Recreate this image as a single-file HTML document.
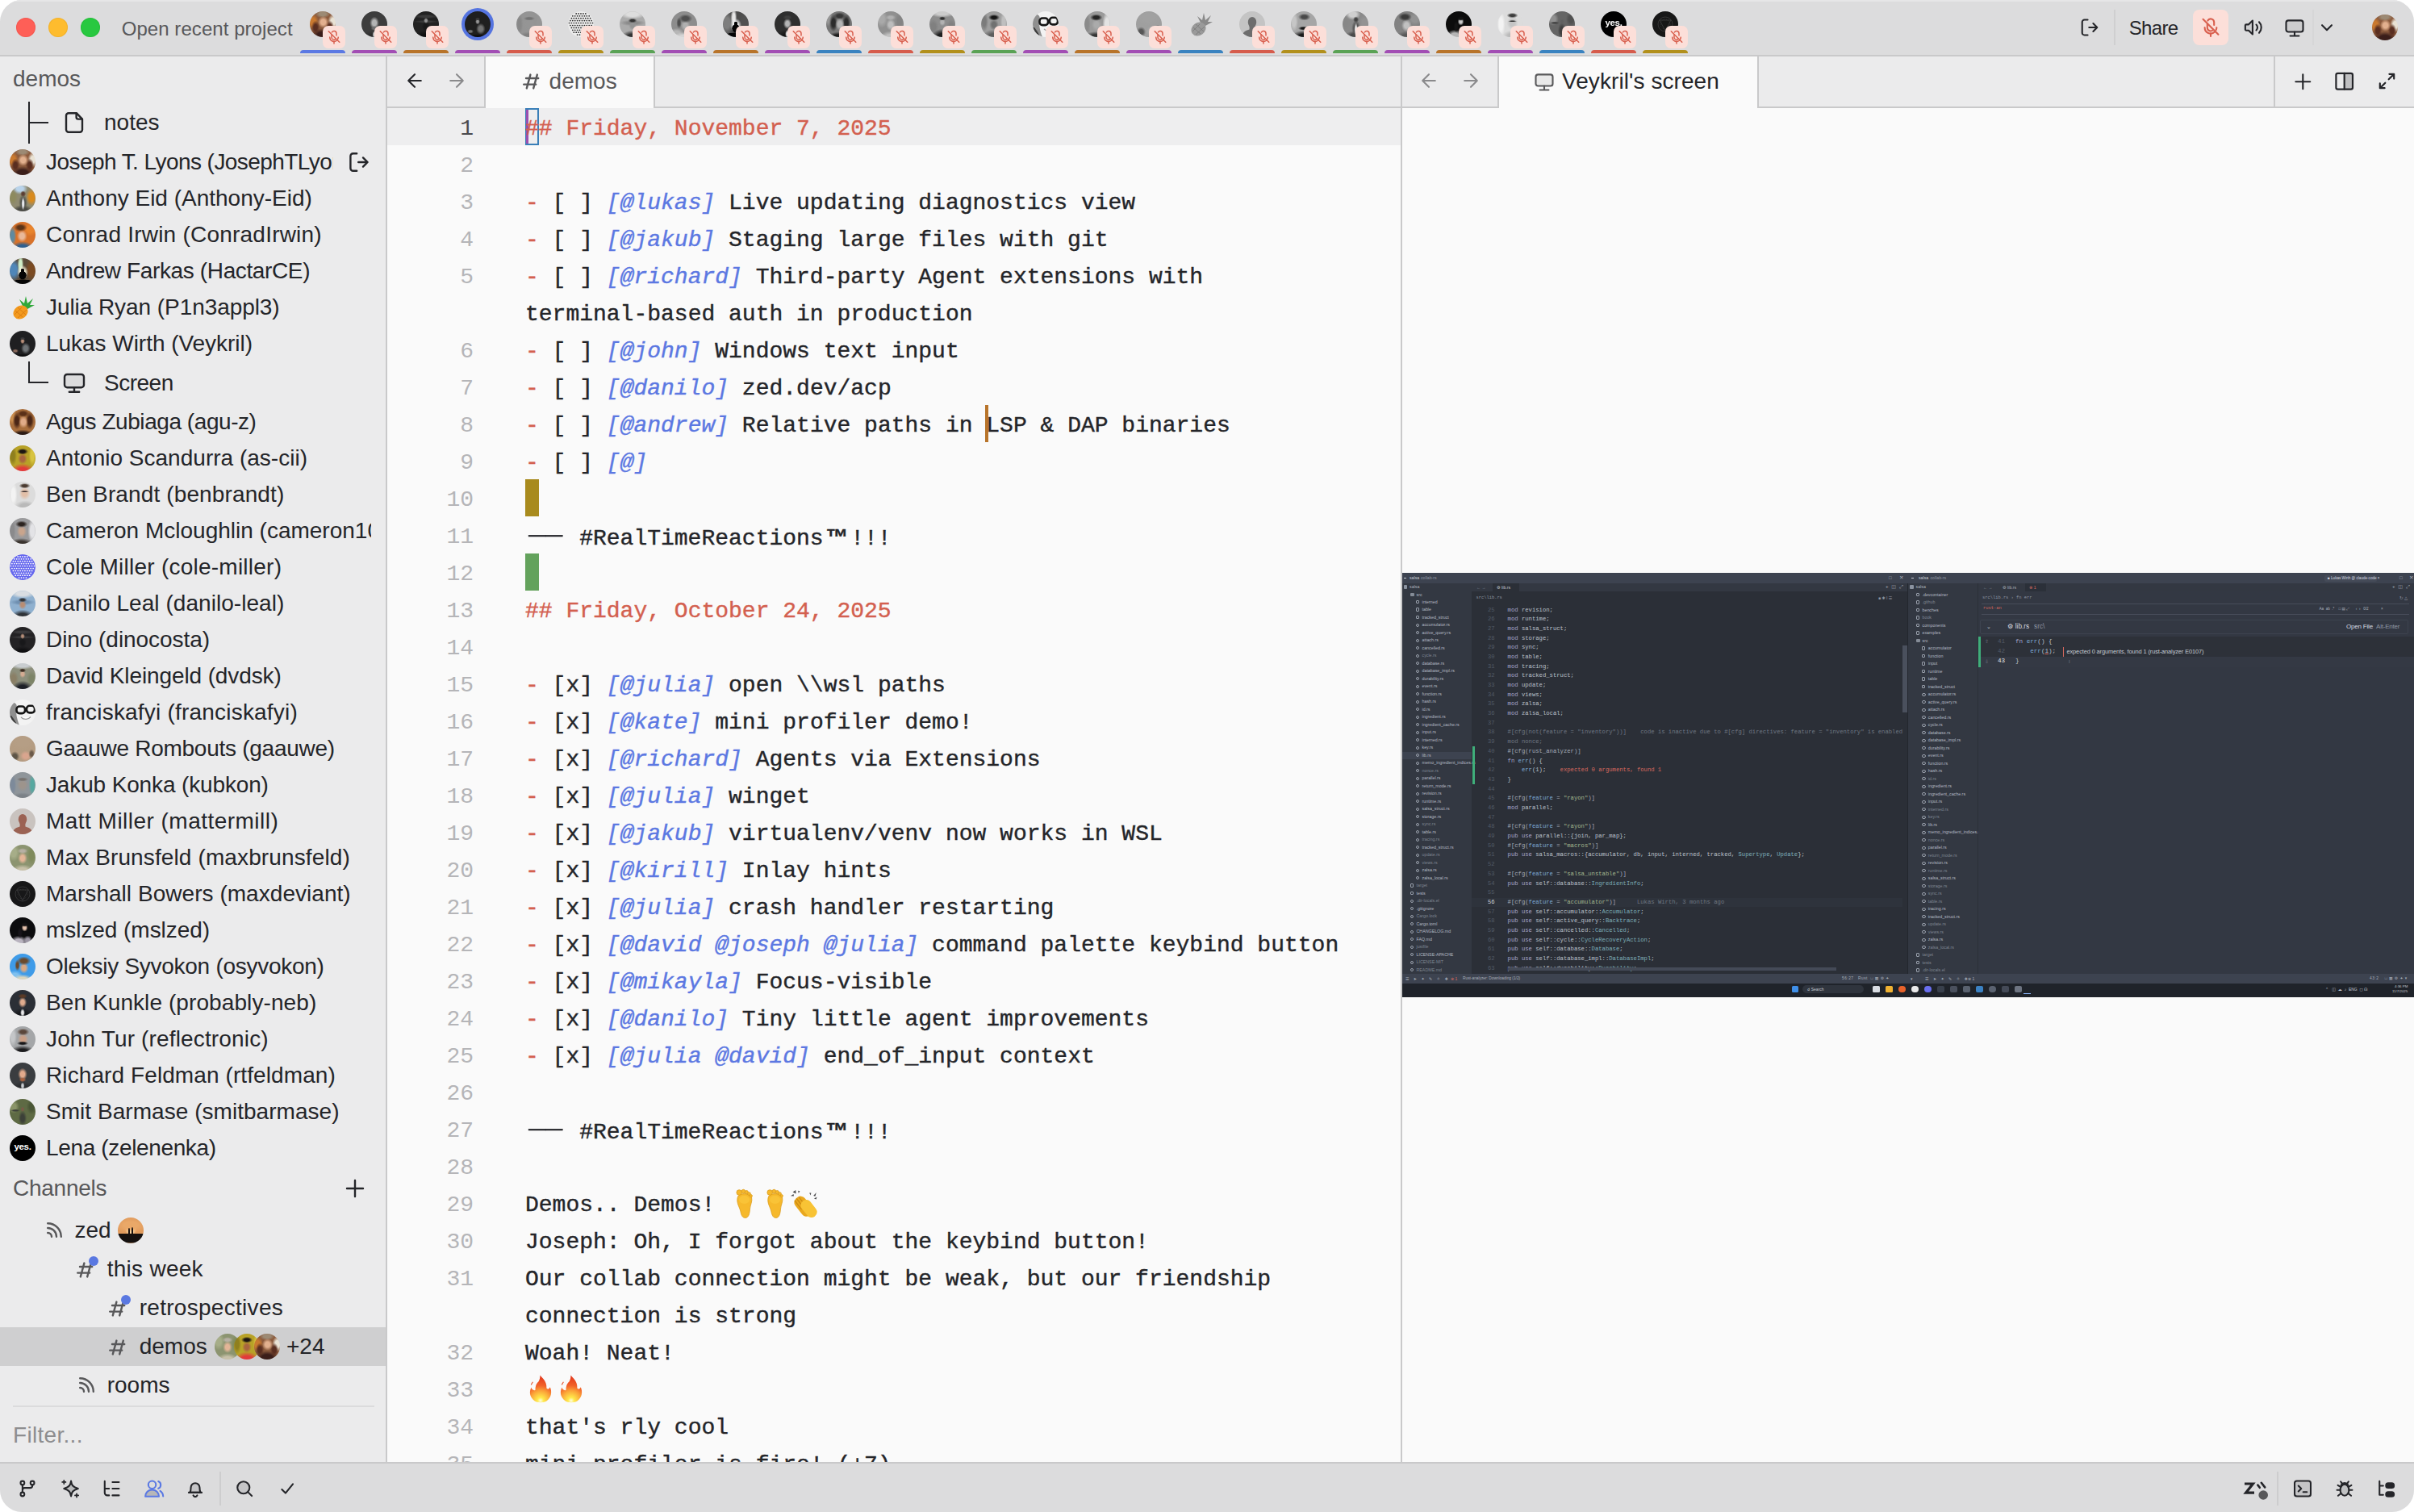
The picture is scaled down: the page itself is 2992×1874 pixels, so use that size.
<!DOCTYPE html>
<html lang="en"><head><meta charset="utf-8"><title>demos — Zed</title>
<style>
*{box-sizing:border-box;margin:0;padding:0}
html,body{width:2992px;height:1874px;background:#fff;overflow:hidden}
body{font-family:"Liberation Sans","DejaVu Sans",sans-serif;font-size:28px;color:#242529;-webkit-font-smoothing:antialiased}
#win{position:absolute;left:0;top:0;width:2992px;height:1874px;background:#fafafa;border-radius:27px;overflow:hidden}
.abs{position:absolute}
.t{position:absolute;white-space:nowrap;line-height:1}
svg{position:absolute;overflow:visible}
/* title bar */
#title{position:absolute;left:0;top:0;width:2992px;height:70px;background:#dcdcdd;border-bottom:2px solid #c9c9ca}
/* status */
#status{position:absolute;left:0;top:1812px;width:2992px;height:62px;background:#dcdcdd;border-top:2px solid #c9c9ca}
/* sidebar */
#side{position:absolute;left:0;top:70px;width:480px;height:1742px;background:#ebebec;border-right:2px solid #c9c9ca;overflow:hidden}
.row{position:absolute;left:0;width:478px;height:45px}
.av{position:absolute;border-radius:50%;overflow:hidden}
.name{position:absolute;left:57px;white-space:nowrap;line-height:32px;height:32px;font-size:28px;color:#242529}
#ed .code{-webkit-text-stroke:0.4px currentColor}
.r{color:#d3604f}
.l{color:#5c78e2;font-style:italic}
.dash{position:relative;top:-3.5px;display:inline-block;width:50.4px;text-align:center;transform:scaleX(1.24);transform-origin:center}
.tm{display:inline-block;width:33.6px;text-align:center;font-family:"Liberation Sans","DejaVu Sans",sans-serif;font-weight:bold}
.em{display:inline-block;position:relative;width:37.8px;height:46px;vertical-align:top;overflow:hidden}
.emsvg{left:0;top:-1.5px}
.emc{position:absolute;left:0;top:0;width:37.8px;color:transparent;font-size:24px;line-height:46px;text-align:center;overflow:hidden}

</style></head>
<body>
<div id="win">
<div id="title">
<div class="abs" style="left:0;top:0;width:2992px;height:2px;background:#e6e6e7"></div><div class="abs" style="left:20px;top:22px;width:24px;height:24px;border-radius:50%;background:#fe5f57;box-shadow:inset 0 0 0 1px #e1494255"></div><div class="abs" style="left:60px;top:22px;width:24px;height:24px;border-radius:50%;background:#febc2e;box-shadow:inset 0 0 0 1px #dfa02355"></div><div class="abs" style="left:100px;top:22px;width:24px;height:24px;border-radius:50%;background:#28c840;box-shadow:inset 0 0 0 1px #1dad2c55"></div><span class="t" style="left:150.7px;top:20.98px;font-size:24px;line-height:29px;color:#58585a;letter-spacing:0.06px">Open recent project</span><div class="abs" style="left:372px;top:62px;width:56px;height:4px;border-radius:4px 4px 0 0;background:#5b79e3"></div><div class="av" style="left:384px;top:14px;width:32px;height:32px;;background:radial-gradient(ellipse 21% 23% at 52% 42%,#e2b08e 0,#e2b08e 45%,transparent 100%),radial-gradient(ellipse 16% 26% at 78% 62%,#5a2e20 0,#5a2e20 45%,transparent 100%),radial-gradient(ellipse 16% 26% at 22% 62%,#5a2e20 0,#5a2e20 45%,transparent 100%),radial-gradient(ellipse 45% 26% at 50% 92%,#3b1e1a 0,#3b1e1a 45%,transparent 100%),radial-gradient(ellipse 30% 16% at 50% 10%,#9c8a74 0,#9c8a74 45%,transparent 100%),radial-gradient(ellipse 20% 30% at 90% 40%,#e9e2d4 0,#e9e2d4 45%,transparent 100%),radial-gradient(ellipse 22% 30% at 12% 40%,#c9792f 0,#c9792f 45%,transparent 100%),#8b5a3c"></div><div class="abs" style="left:400px;top:32px;width:28px;height:28px;border-radius:7px;background:#fcdfd9"></div><svg style="left:404px;top:36px" width="20" height="20" viewBox="0 0 16 16" fill="none" stroke="#d9604f" stroke-width="1.2" stroke-linecap="round" stroke-linejoin="round" ><path d="M8 12.2 V14.3"/><path d="M10.4 6.3 V4.3 A2.4 2.4 0 0 0 5.9 3.2"/><path d="M5.6 5.6 V8.1 A2.4 2.4 0 0 0 9.6 9.9"/><path d="M12.2 8.1 A4.2 4.2 0 0 1 11.7 9.9"/><path d="M3.8 8.1 A4.2 4.2 0 0 0 10.9 11.2"/><path d="M2.6 2.2 L13.4 13"/></svg><div class="abs" style="left:436px;top:62px;width:56px;height:4px;border-radius:4px 4px 0 0;background:#a24eb4"></div><div class="av" style="left:448px;top:14px;width:32px;height:32px;filter:grayscale(1);;background:radial-gradient(ellipse 14% 9% at 50% 66%,#a8613f 0,#a8613f 45%,transparent 100%),radial-gradient(ellipse 18% 24% at 50% 45%,#e2aa8c 0,#e2aa8c 45%,transparent 100%),radial-gradient(ellipse 8% 14% at 50% 90%,#c9ccd0 0,#c9ccd0 45%,transparent 100%),radial-gradient(ellipse 46% 26% at 50% 100%,#2b2d30 0,#2b2d30 45%,transparent 100%),#3a3d40"></div><div class="abs" style="left:464px;top:32px;width:28px;height:28px;border-radius:7px;background:#fcdfd9"></div><svg style="left:468px;top:36px" width="20" height="20" viewBox="0 0 16 16" fill="none" stroke="#d9604f" stroke-width="1.2" stroke-linecap="round" stroke-linejoin="round" ><path d="M8 12.2 V14.3"/><path d="M10.4 6.3 V4.3 A2.4 2.4 0 0 0 5.9 3.2"/><path d="M5.6 5.6 V8.1 A2.4 2.4 0 0 0 9.6 9.9"/><path d="M12.2 8.1 A4.2 4.2 0 0 1 11.7 9.9"/><path d="M3.8 8.1 A4.2 4.2 0 0 0 10.9 11.2"/><path d="M2.6 2.2 L13.4 13"/></svg><div class="abs" style="left:500px;top:62px;width:56px;height:4px;border-radius:4px 4px 0 0;background:#b8742a"></div><div class="av" style="left:512px;top:14px;width:32px;height:32px;filter:grayscale(1);;background:radial-gradient(ellipse 44% 26% at 50% 100%,#101012 0,#101012 45%,transparent 100%),radial-gradient(ellipse 9% 11% at 50% 36%,#b48d78 0,#b48d78 45%,transparent 100%),radial-gradient(ellipse 16% 20% at 50% 60%,#18181a 0,#18181a 45%,transparent 100%),radial-gradient(ellipse 50% 6% at 50% 40%,#39383a 0,#39383a 45%,transparent 100%),radial-gradient(ellipse 50% 8% at 50% 20%,#3b3a3c 0,#3b3a3c 45%,transparent 100%),#232224"></div><div class="abs" style="left:528px;top:32px;width:28px;height:28px;border-radius:7px;background:#fcdfd9"></div><svg style="left:532px;top:36px" width="20" height="20" viewBox="0 0 16 16" fill="none" stroke="#d9604f" stroke-width="1.2" stroke-linecap="round" stroke-linejoin="round" ><path d="M8 12.2 V14.3"/><path d="M10.4 6.3 V4.3 A2.4 2.4 0 0 0 5.9 3.2"/><path d="M5.6 5.6 V8.1 A2.4 2.4 0 0 0 9.6 9.9"/><path d="M12.2 8.1 A4.2 4.2 0 0 1 11.7 9.9"/><path d="M3.8 8.1 A4.2 4.2 0 0 0 10.9 11.2"/><path d="M2.6 2.2 L13.4 13"/></svg><div class="abs" style="left:564px;top:62px;width:56px;height:4px;border-radius:4px 4px 0 0;background:#a24eb4"></div><div class="abs" style="left:572px;top:10px;width:40px;height:40px;border-radius:50%;background:#5574e0"></div><div class="av" style="left:576px;top:14px;width:32px;height:32px;filter:grayscale(1);;background:radial-gradient(ellipse 50% 12% at 50% 100%,#0c0c0d 0,#0c0c0d 45%,transparent 100%),radial-gradient(ellipse 12% 8% at 22% 78%,#8a6a5c 0,#8a6a5c 45%,transparent 100%),radial-gradient(ellipse 10% 6% at 50% 30%,#3a3a3c 0,#3a3a3c 45%,transparent 100%),radial-gradient(ellipse 9% 11% at 50% 40%,#b98f7a 0,#b98f7a 45%,transparent 100%),radial-gradient(ellipse 18% 22% at 62% 68%,#6f7376 0,#6f7376 45%,transparent 100%),#1f1f21"></div><div class="abs" style="left:628px;top:62px;width:56px;height:4px;border-radius:4px 4px 0 0;background:#d65c4c"></div><div class="av" style="left:640px;top:14px;width:32px;height:32px;filter:grayscale(1);;background:radial-gradient(ellipse 40% 16% at 50% 95%,#7b8187 0,#7b8187 45%,transparent 100%),radial-gradient(ellipse 22% 8% at 50% 28%,#77726e 0,#77726e 45%,transparent 100%),radial-gradient(ellipse 22% 26% at 50% 50%,#9d948c 0,#9d948c 45%,transparent 100%),radial-gradient(ellipse 14% 44% at 12% 50%,#7d8a9a 0,#7d8a9a 45%,transparent 100%),radial-gradient(ellipse 14% 44% at 88% 50%,#57a8a0 0,#57a8a0 45%,transparent 100%),#8f959a"></div><div class="abs" style="left:656px;top:32px;width:28px;height:28px;border-radius:7px;background:#fcdfd9"></div><svg style="left:660px;top:36px" width="20" height="20" viewBox="0 0 16 16" fill="none" stroke="#d9604f" stroke-width="1.2" stroke-linecap="round" stroke-linejoin="round" ><path d="M8 12.2 V14.3"/><path d="M10.4 6.3 V4.3 A2.4 2.4 0 0 0 5.9 3.2"/><path d="M5.6 5.6 V8.1 A2.4 2.4 0 0 0 9.6 9.9"/><path d="M12.2 8.1 A4.2 4.2 0 0 1 11.7 9.9"/><path d="M3.8 8.1 A4.2 4.2 0 0 0 10.9 11.2"/><path d="M2.6 2.2 L13.4 13"/></svg><div class="abs" style="left:692px;top:62px;width:56px;height:4px;border-radius:4px 4px 0 0;background:#b2901c"></div><div class="av" style="left:704px;top:14px;width:32px;height:32px;filter:grayscale(1);;filter:none"><svg width="32" height="32" viewBox="0 0 32 32" style="left:0;top:0"><circle cx="16.0" cy="16.0" r="16.0" fill="#ececec"/><g fill="#2a2a2a"><circle cx="1.5" cy="14.5" r="0.87"/><circle cx="4.4" cy="8.7" r="0.87"/><circle cx="2.9" cy="11.6" r="0.87"/><circle cx="4.4" cy="14.5" r="0.87"/><circle cx="2.9" cy="17.5" r="0.87"/><circle cx="4.4" cy="20.4" r="0.87"/><circle cx="5.8" cy="5.8" r="0.87"/><circle cx="7.3" cy="8.7" r="0.87"/><circle cx="5.8" cy="11.6" r="0.87"/><circle cx="7.3" cy="14.5" r="0.87"/><circle cx="5.8" cy="17.5" r="0.87"/><circle cx="7.3" cy="20.4" r="0.87"/><circle cx="5.8" cy="23.3" r="0.87"/><circle cx="7.3" cy="26.2" r="0.87"/><circle cx="10.2" cy="2.9" r="0.87"/><circle cx="8.7" cy="5.8" r="0.87"/><circle cx="10.2" cy="8.7" r="0.87"/><circle cx="8.7" cy="11.6" r="0.87"/><circle cx="10.2" cy="14.5" r="0.87"/><circle cx="8.7" cy="17.5" r="0.87"/><circle cx="10.2" cy="20.4" r="0.87"/><circle cx="8.7" cy="23.3" r="0.87"/><circle cx="10.2" cy="26.2" r="0.87"/><circle cx="13.1" cy="2.9" r="0.87"/><circle cx="11.6" cy="5.8" r="0.87"/><circle cx="13.1" cy="8.7" r="0.87"/><circle cx="11.6" cy="11.6" r="0.87"/><circle cx="13.1" cy="14.5" r="0.87"/><circle cx="11.6" cy="17.5" r="0.87"/><circle cx="13.1" cy="20.4" r="0.87"/><circle cx="11.6" cy="23.3" r="0.87"/><circle cx="13.1" cy="26.2" r="0.87"/><circle cx="11.6" cy="29.1" r="0.87"/><circle cx="16.0" cy="2.9" r="0.87"/><circle cx="14.5" cy="5.8" r="0.87"/><circle cx="16.0" cy="8.7" r="0.87"/><circle cx="14.5" cy="11.6" r="0.87"/><circle cx="16.0" cy="14.5" r="0.87"/><circle cx="14.5" cy="17.5" r="0.87"/><circle cx="16.0" cy="20.4" r="0.87"/><circle cx="14.5" cy="23.3" r="0.87"/><circle cx="16.0" cy="26.2" r="0.87"/><circle cx="14.5" cy="29.1" r="0.87"/><circle cx="18.9" cy="2.9" r="0.87"/><circle cx="17.5" cy="5.8" r="0.87"/><circle cx="18.9" cy="8.7" r="0.87"/><circle cx="17.5" cy="11.6" r="0.87"/><circle cx="18.9" cy="14.5" r="0.87"/><circle cx="17.5" cy="17.5" r="0.87"/><circle cx="18.9" cy="20.4" r="0.87"/><circle cx="17.5" cy="23.3" r="0.87"/><circle cx="18.9" cy="26.2" r="0.87"/><circle cx="17.5" cy="29.1" r="0.87"/><circle cx="21.8" cy="2.9" r="0.87"/><circle cx="20.4" cy="5.8" r="0.87"/><circle cx="21.8" cy="8.7" r="0.87"/><circle cx="20.4" cy="11.6" r="0.87"/><circle cx="21.8" cy="14.5" r="0.87"/><circle cx="20.4" cy="17.5" r="0.87"/><circle cx="21.8" cy="20.4" r="0.87"/><circle cx="20.4" cy="23.3" r="0.87"/><circle cx="21.8" cy="26.2" r="0.87"/><circle cx="20.4" cy="29.1" r="0.87"/><circle cx="23.3" cy="5.8" r="0.87"/><circle cx="24.7" cy="8.7" r="0.87"/><circle cx="23.3" cy="11.6" r="0.87"/><circle cx="24.7" cy="14.5" r="0.87"/><circle cx="23.3" cy="17.5" r="0.87"/><circle cx="24.7" cy="20.4" r="0.87"/><circle cx="23.3" cy="23.3" r="0.87"/><circle cx="24.7" cy="26.2" r="0.87"/><circle cx="26.2" cy="5.8" r="0.87"/><circle cx="27.6" cy="8.7" r="0.87"/><circle cx="26.2" cy="11.6" r="0.87"/><circle cx="27.6" cy="14.5" r="0.87"/><circle cx="26.2" cy="17.5" r="0.87"/><circle cx="27.6" cy="20.4" r="0.87"/><circle cx="26.2" cy="23.3" r="0.87"/><circle cx="29.1" cy="11.6" r="0.87"/><circle cx="30.5" cy="14.5" r="0.87"/><circle cx="29.1" cy="17.5" r="0.87"/></g></svg></div><div class="abs" style="left:720px;top:32px;width:28px;height:28px;border-radius:7px;background:#fcdfd9"></div><svg style="left:724px;top:36px" width="20" height="20" viewBox="0 0 16 16" fill="none" stroke="#d9604f" stroke-width="1.2" stroke-linecap="round" stroke-linejoin="round" ><path d="M8 12.2 V14.3"/><path d="M10.4 6.3 V4.3 A2.4 2.4 0 0 0 5.9 3.2"/><path d="M5.6 5.6 V8.1 A2.4 2.4 0 0 0 9.6 9.9"/><path d="M12.2 8.1 A4.2 4.2 0 0 1 11.7 9.9"/><path d="M3.8 8.1 A4.2 4.2 0 0 0 10.9 11.2"/><path d="M2.6 2.2 L13.4 13"/></svg><div class="abs" style="left:756px;top:62px;width:56px;height:4px;border-radius:4px 4px 0 0;background:#5aa255"></div><div class="av" style="left:768px;top:14px;width:32px;height:32px;filter:grayscale(1);;background:radial-gradient(ellipse 17% 9% at 50% 36%,#33363b 0,#33363b 45%,transparent 100%),radial-gradient(ellipse 15% 18% at 50% 55%,#b88d74 0,#b88d74 45%,transparent 100%),radial-gradient(ellipse 44% 26% at 50% 100%,#2f3338 0,#2f3338 45%,transparent 100%),radial-gradient(ellipse 50% 12% at 50% 45%,#6f8fb0 0,#6f8fb0 45%,transparent 100%),radial-gradient(ellipse 50% 18% at 50% 12%,#d9dde2 0,#d9dde2 45%,transparent 100%),#8fb0cf"></div><div class="abs" style="left:784px;top:32px;width:28px;height:28px;border-radius:7px;background:#fcdfd9"></div><svg style="left:788px;top:36px" width="20" height="20" viewBox="0 0 16 16" fill="none" stroke="#d9604f" stroke-width="1.2" stroke-linecap="round" stroke-linejoin="round" ><path d="M8 12.2 V14.3"/><path d="M10.4 6.3 V4.3 A2.4 2.4 0 0 0 5.9 3.2"/><path d="M5.6 5.6 V8.1 A2.4 2.4 0 0 0 9.6 9.9"/><path d="M12.2 8.1 A4.2 4.2 0 0 1 11.7 9.9"/><path d="M3.8 8.1 A4.2 4.2 0 0 0 10.9 11.2"/><path d="M2.6 2.2 L13.4 13"/></svg><div class="abs" style="left:820px;top:62px;width:56px;height:4px;border-radius:4px 4px 0 0;background:#a24eb4"></div><div class="av" style="left:832px;top:14px;width:32px;height:32px;filter:grayscale(1);;background:radial-gradient(ellipse 10% 22% at 30% 45%,#6b4a2c 0,#6b4a2c 45%,transparent 100%),radial-gradient(ellipse 27% 17% at 55% 28%,#6b4a2c 0,#6b4a2c 45%,transparent 100%),radial-gradient(ellipse 18% 22% at 55% 55%,#d9a883 0,#d9a883 45%,transparent 100%),radial-gradient(ellipse 40% 20% at 50% 100%,#d8d5c0 0,#d8d5c0 45%,transparent 100%),radial-gradient(ellipse 30% 20% at 20% 85%,#7fc0ef 0,#7fc0ef 45%,transparent 100%),#3f9be8"></div><div class="abs" style="left:848px;top:32px;width:28px;height:28px;border-radius:7px;background:#fcdfd9"></div><svg style="left:852px;top:36px" width="20" height="20" viewBox="0 0 16 16" fill="none" stroke="#d9604f" stroke-width="1.2" stroke-linecap="round" stroke-linejoin="round" ><path d="M8 12.2 V14.3"/><path d="M10.4 6.3 V4.3 A2.4 2.4 0 0 0 5.9 3.2"/><path d="M5.6 5.6 V8.1 A2.4 2.4 0 0 0 9.6 9.9"/><path d="M12.2 8.1 A4.2 4.2 0 0 1 11.7 9.9"/><path d="M3.8 8.1 A4.2 4.2 0 0 0 10.9 11.2"/><path d="M2.6 2.2 L13.4 13"/></svg><div class="abs" style="left:884px;top:62px;width:56px;height:4px;border-radius:4px 4px 0 0;background:#b8742a"></div><div class="av" style="left:896px;top:14px;width:32px;height:32px;filter:grayscale(1);;background:radial-gradient(ellipse 6% 7% at 50% 46%,#050505 0,#050505 92%,transparent 100%),radial-gradient(ellipse 15% 17% at 50% 66%,#050505 0,#050505 92%,transparent 100%),radial-gradient(ellipse 50% 18% at 50% 100%,#050505 0,#050505 92%,transparent 100%),radial-gradient(ellipse 22% 28% at 50% 55%,#f6f0d8 0,#f6f0d8 45%,transparent 100%),radial-gradient(ellipse 26% 45% at 85% 45%,#7a4a22 0,#7a4a22 45%,transparent 100%),radial-gradient(ellipse 12% 40% at 42% 25%,#cfeec8 0,#cfeec8 45%,transparent 100%),radial-gradient(ellipse 28% 45% at 15% 45%,#4f86b8 0,#4f86b8 45%,transparent 100%),#5a4a38"></div><div class="abs" style="left:912px;top:32px;width:28px;height:28px;border-radius:7px;background:#fcdfd9"></div><svg style="left:916px;top:36px" width="20" height="20" viewBox="0 0 16 16" fill="none" stroke="#d9604f" stroke-width="1.2" stroke-linecap="round" stroke-linejoin="round" ><path d="M8 12.2 V14.3"/><path d="M10.4 6.3 V4.3 A2.4 2.4 0 0 0 5.9 3.2"/><path d="M5.6 5.6 V8.1 A2.4 2.4 0 0 0 9.6 9.9"/><path d="M12.2 8.1 A4.2 4.2 0 0 1 11.7 9.9"/><path d="M3.8 8.1 A4.2 4.2 0 0 0 10.9 11.2"/><path d="M2.6 2.2 L13.4 13"/></svg><div class="abs" style="left:948px;top:62px;width:56px;height:4px;border-radius:4px 4px 0 0;background:#a24eb4"></div><div class="av" style="left:960px;top:14px;width:32px;height:32px;filter:grayscale(1);;background:radial-gradient(ellipse 18% 10% at 50% 24%,#5a3a26 0,#5a3a26 45%,transparent 100%),radial-gradient(ellipse 16% 21% at 50% 48%,#e0ac8e 0,#e0ac8e 45%,transparent 100%),radial-gradient(ellipse 9% 16% at 50% 88%,#e8e8ea 0,#e8e8ea 45%,transparent 100%),radial-gradient(ellipse 46% 30% at 50% 100%,#15171b 0,#15171b 45%,transparent 100%),#2b2f36"></div><div class="abs" style="left:976px;top:32px;width:28px;height:28px;border-radius:7px;background:#fcdfd9"></div><svg style="left:980px;top:36px" width="20" height="20" viewBox="0 0 16 16" fill="none" stroke="#d9604f" stroke-width="1.2" stroke-linecap="round" stroke-linejoin="round" ><path d="M8 12.2 V14.3"/><path d="M10.4 6.3 V4.3 A2.4 2.4 0 0 0 5.9 3.2"/><path d="M5.6 5.6 V8.1 A2.4 2.4 0 0 0 9.6 9.9"/><path d="M12.2 8.1 A4.2 4.2 0 0 1 11.7 9.9"/><path d="M3.8 8.1 A4.2 4.2 0 0 0 10.9 11.2"/><path d="M2.6 2.2 L13.4 13"/></svg><div class="abs" style="left:1012px;top:62px;width:56px;height:4px;border-radius:4px 4px 0 0;background:#3a83c0"></div><div class="av" style="left:1024px;top:14px;width:32px;height:32px;filter:grayscale(1);;background:radial-gradient(ellipse 18% 24% at 53% 50%,#e0ab88 0,#e0ab88 45%,transparent 100%),radial-gradient(ellipse 24% 14% at 52% 18%,#5a3018 0,#5a3018 45%,transparent 100%),radial-gradient(ellipse 16% 34% at 78% 45%,#4a2616 0,#4a2616 45%,transparent 100%),radial-gradient(ellipse 16% 34% at 28% 45%,#4a2616 0,#4a2616 45%,transparent 100%),radial-gradient(ellipse 44% 18% at 50% 98%,#2b1a14 0,#2b1a14 45%,transparent 100%),radial-gradient(ellipse 20% 30% at 10% 30%,#c98d4e 0,#c98d4e 45%,transparent 100%),#a86e3c"></div><div class="abs" style="left:1040px;top:32px;width:28px;height:28px;border-radius:7px;background:#fcdfd9"></div><svg style="left:1044px;top:36px" width="20" height="20" viewBox="0 0 16 16" fill="none" stroke="#d9604f" stroke-width="1.2" stroke-linecap="round" stroke-linejoin="round" ><path d="M8 12.2 V14.3"/><path d="M10.4 6.3 V4.3 A2.4 2.4 0 0 0 5.9 3.2"/><path d="M5.6 5.6 V8.1 A2.4 2.4 0 0 0 9.6 9.9"/><path d="M12.2 8.1 A4.2 4.2 0 0 1 11.7 9.9"/><path d="M3.8 8.1 A4.2 4.2 0 0 0 10.9 11.2"/><path d="M2.6 2.2 L13.4 13"/></svg><div class="abs" style="left:1076px;top:62px;width:56px;height:4px;border-radius:4px 4px 0 0;background:#d65c4c"></div><div class="av" style="left:1088px;top:14px;width:32px;height:32px;filter:grayscale(1);;background:radial-gradient(ellipse 20% 11% at 50% 24%,#b7b0a3 0,#b7b0a3 45%,transparent 100%),radial-gradient(ellipse 18% 23% at 50% 52%,#e3b597 0,#e3b597 45%,transparent 100%),radial-gradient(ellipse 42% 24% at 50% 100%,#c7c0a8 0,#c7c0a8 45%,transparent 100%),radial-gradient(ellipse 20% 40% at 85% 40%,#7f8a5c 0,#7f8a5c 45%,transparent 100%),radial-gradient(ellipse 24% 34% at 15% 30%,#a6ad88 0,#a6ad88 45%,transparent 100%),#8c9470"></div><div class="abs" style="left:1104px;top:32px;width:28px;height:28px;border-radius:7px;background:#fcdfd9"></div><svg style="left:1108px;top:36px" width="20" height="20" viewBox="0 0 16 16" fill="none" stroke="#d9604f" stroke-width="1.2" stroke-linecap="round" stroke-linejoin="round" ><path d="M8 12.2 V14.3"/><path d="M10.4 6.3 V4.3 A2.4 2.4 0 0 0 5.9 3.2"/><path d="M5.6 5.6 V8.1 A2.4 2.4 0 0 0 9.6 9.9"/><path d="M12.2 8.1 A4.2 4.2 0 0 1 11.7 9.9"/><path d="M3.8 8.1 A4.2 4.2 0 0 0 10.9 11.2"/><path d="M2.6 2.2 L13.4 13"/></svg><div class="abs" style="left:1140px;top:62px;width:56px;height:4px;border-radius:4px 4px 0 0;background:#b2901c"></div><div class="av" style="left:1152px;top:14px;width:32px;height:32px;filter:grayscale(1);;background:radial-gradient(ellipse 13% 8% at 50% 28%,#3d2d22 0,#3d2d22 45%,transparent 100%),radial-gradient(ellipse 12% 15% at 50% 42%,#d3ab92 0,#d3ab92 45%,transparent 100%),radial-gradient(ellipse 42% 32% at 50% 100%,#1d1f26 0,#1d1f26 45%,transparent 100%),radial-gradient(ellipse 20% 30% at 85% 60%,#7d8468 0,#7d8468 45%,transparent 100%),radial-gradient(ellipse 20% 30% at 15% 60%,#8a7f66 0,#8a7f66 45%,transparent 100%),radial-gradient(ellipse 50% 16% at 50% 8%,#c9cdd0 0,#c9cdd0 45%,transparent 100%),#8d8f7c"></div><div class="abs" style="left:1168px;top:32px;width:28px;height:28px;border-radius:7px;background:#fcdfd9"></div><svg style="left:1172px;top:36px" width="20" height="20" viewBox="0 0 16 16" fill="none" stroke="#d9604f" stroke-width="1.2" stroke-linecap="round" stroke-linejoin="round" ><path d="M8 12.2 V14.3"/><path d="M10.4 6.3 V4.3 A2.4 2.4 0 0 0 5.9 3.2"/><path d="M5.6 5.6 V8.1 A2.4 2.4 0 0 0 9.6 9.9"/><path d="M12.2 8.1 A4.2 4.2 0 0 1 11.7 9.9"/><path d="M3.8 8.1 A4.2 4.2 0 0 0 10.9 11.2"/><path d="M2.6 2.2 L13.4 13"/></svg><div class="abs" style="left:1204px;top:62px;width:56px;height:4px;border-radius:4px 4px 0 0;background:#5aa255"></div><div class="av" style="left:1216px;top:14px;width:32px;height:32px;filter:grayscale(1);;background:radial-gradient(ellipse 22% 12% at 50% 24%,#1c1512 0,#1c1512 45%,transparent 100%),radial-gradient(ellipse 18% 22% at 50% 52%,#a8653f 0,#a8653f 45%,transparent 100%),radial-gradient(ellipse 46% 30% at 50% 100%,#e23a3a 0,#e23a3a 45%,transparent 100%),radial-gradient(ellipse 14% 40% at 88% 40%,#d8c440 0,#d8c440 45%,transparent 100%),radial-gradient(ellipse 16% 40% at 12% 40%,#8f7f1e 0,#8f7f1e 45%,transparent 100%),#b8a227"></div><div class="abs" style="left:1232px;top:32px;width:28px;height:28px;border-radius:7px;background:#fcdfd9"></div><svg style="left:1236px;top:36px" width="20" height="20" viewBox="0 0 16 16" fill="none" stroke="#d9604f" stroke-width="1.2" stroke-linecap="round" stroke-linejoin="round" ><path d="M8 12.2 V14.3"/><path d="M10.4 6.3 V4.3 A2.4 2.4 0 0 0 5.9 3.2"/><path d="M5.6 5.6 V8.1 A2.4 2.4 0 0 0 9.6 9.9"/><path d="M12.2 8.1 A4.2 4.2 0 0 1 11.7 9.9"/><path d="M3.8 8.1 A4.2 4.2 0 0 0 10.9 11.2"/><path d="M2.6 2.2 L13.4 13"/></svg><div class="abs" style="left:1268px;top:62px;width:56px;height:4px;border-radius:4px 4px 0 0;background:#a24eb4"></div><div class="av" style="left:1280px;top:14px;width:32px;height:32px;filter:grayscale(1);;background:#f3f3f3"><svg width="32" height="32" viewBox="0 0 32 32" style="left:0;top:0"><path d="M0 6 C5 2 9 4 9 10 C7 16 9 24 12 32 H0 Z" fill="#8f8f8f"/><path d="M2 20 C5 24 8 28 9 32 H0 V20 Z" fill="#3c3c3c"/><g fill="none" stroke="#151515" stroke-width="2.6"><rect x="8.5" y="8.5" width="10.5" height="8.6" rx="3.6"/><rect x="21" y="7.8" width="10" height="8.6" rx="3.6"/></g><path d="M14 22 C18 25.5 23 25 26 21.5" stroke="#9a9a9a" stroke-width="1.2" fill="#fff"/></svg></div><div class="abs" style="left:1296px;top:32px;width:28px;height:28px;border-radius:7px;background:#fcdfd9"></div><svg style="left:1300px;top:36px" width="20" height="20" viewBox="0 0 16 16" fill="none" stroke="#d9604f" stroke-width="1.2" stroke-linecap="round" stroke-linejoin="round" ><path d="M8 12.2 V14.3"/><path d="M10.4 6.3 V4.3 A2.4 2.4 0 0 0 5.9 3.2"/><path d="M5.6 5.6 V8.1 A2.4 2.4 0 0 0 9.6 9.9"/><path d="M12.2 8.1 A4.2 4.2 0 0 1 11.7 9.9"/><path d="M3.8 8.1 A4.2 4.2 0 0 0 10.9 11.2"/><path d="M2.6 2.2 L13.4 13"/></svg><div class="abs" style="left:1332px;top:62px;width:56px;height:4px;border-radius:4px 4px 0 0;background:#b8742a"></div><div class="av" style="left:1344px;top:14px;width:32px;height:32px;filter:grayscale(1);;background:radial-gradient(ellipse 24% 13% at 46% 24%,#2c2420 0,#2c2420 45%,transparent 100%),radial-gradient(ellipse 19% 24% at 47% 52%,#c9a58d 0,#c9a58d 45%,transparent 100%),radial-gradient(ellipse 46% 22% at 45% 100%,#3a332e 0,#3a332e 45%,transparent 100%),radial-gradient(ellipse 14% 50% at 10% 50%,#8a8a8c 0,#8a8a8c 45%,transparent 100%),radial-gradient(ellipse 18% 50% at 88% 50%,#e3e3e6 0,#e3e3e6 45%,transparent 100%),#9a9a9c"></div><div class="abs" style="left:1360px;top:32px;width:28px;height:28px;border-radius:7px;background:#fcdfd9"></div><svg style="left:1364px;top:36px" width="20" height="20" viewBox="0 0 16 16" fill="none" stroke="#d9604f" stroke-width="1.2" stroke-linecap="round" stroke-linejoin="round" ><path d="M8 12.2 V14.3"/><path d="M10.4 6.3 V4.3 A2.4 2.4 0 0 0 5.9 3.2"/><path d="M5.6 5.6 V8.1 A2.4 2.4 0 0 0 9.6 9.9"/><path d="M12.2 8.1 A4.2 4.2 0 0 1 11.7 9.9"/><path d="M3.8 8.1 A4.2 4.2 0 0 0 10.9 11.2"/><path d="M2.6 2.2 L13.4 13"/></svg><div class="abs" style="left:1396px;top:62px;width:56px;height:4px;border-radius:4px 4px 0 0;background:#a24eb4"></div><div class="av" style="left:1408px;top:14px;width:32px;height:32px;filter:grayscale(1);;background:radial-gradient(ellipse 12% 18% at 85% 70%,#6b5a4a 0,#6b5a4a 45%,transparent 100%),radial-gradient(ellipse 22% 20% at 62% 78%,#d9a58e 0,#d9a58e 45%,transparent 100%),radial-gradient(ellipse 18% 20% at 20% 80%,#5e5547 0,#5e5547 45%,transparent 100%),radial-gradient(ellipse 50% 30% at 50% 25%,#b59e85 0,#b59e85 45%,transparent 100%),#b49c82"></div><div class="abs" style="left:1424px;top:32px;width:28px;height:28px;border-radius:7px;background:#fcdfd9"></div><svg style="left:1428px;top:36px" width="20" height="20" viewBox="0 0 16 16" fill="none" stroke="#d9604f" stroke-width="1.2" stroke-linecap="round" stroke-linejoin="round" ><path d="M8 12.2 V14.3"/><path d="M10.4 6.3 V4.3 A2.4 2.4 0 0 0 5.9 3.2"/><path d="M5.6 5.6 V8.1 A2.4 2.4 0 0 0 9.6 9.9"/><path d="M12.2 8.1 A4.2 4.2 0 0 1 11.7 9.9"/><path d="M3.8 8.1 A4.2 4.2 0 0 0 10.9 11.2"/><path d="M2.6 2.2 L13.4 13"/></svg><div class="abs" style="left:1460px;top:62px;width:56px;height:4px;border-radius:4px 4px 0 0;background:#3a83c0"></div><div class="av" style="left:1472px;top:14px;width:32px;height:32px;filter:grayscale(1);;border-radius:0;filter:none"><svg width="32" height="32" viewBox="0 0 32 32" style="left:0;top:0"><g fill="#8a8a8a"><path d="M17 16 L12 6 L18 11 L20 2 L22 11 L29 5 L25 13 L31 13 L22 18 Z"/></g><ellipse cx="13.5" cy="22" rx="9.5" ry="8" transform="rotate(-35 13.5 22)" fill="#9a9a9a"/><g stroke="#7c7c7c" stroke-width="0.9" fill="none"><path d="M7 20 L16 28 M10 16 L20 25 M6 25 L15 16 M10 29 L21 19"/></g></svg></div><div class="abs" style="left:1524px;top:62px;width:56px;height:4px;border-radius:4px 4px 0 0;background:#d65c4c"></div><div class="av" style="left:1536px;top:14px;width:32px;height:32px;filter:grayscale(1);;background:#c9c3bf"><svg width="32" height="32" viewBox="0 0 32 32" style="left:0;top:0"><g fill="#9b6253"><ellipse cx="16" cy="13.5" rx="5.2" ry="6.6"/><rect x="12.6" y="17" width="6.8" height="7"/><path d="M3 32 C4 25 9 23.5 12.6 22.5 H19.4 C23 23.5 28 25 29 32 Z"/></g></svg></div><div class="abs" style="left:1552px;top:32px;width:28px;height:28px;border-radius:7px;background:#fcdfd9"></div><svg style="left:1556px;top:36px" width="20" height="20" viewBox="0 0 16 16" fill="none" stroke="#d9604f" stroke-width="1.2" stroke-linecap="round" stroke-linejoin="round" ><path d="M8 12.2 V14.3"/><path d="M10.4 6.3 V4.3 A2.4 2.4 0 0 0 5.9 3.2"/><path d="M5.6 5.6 V8.1 A2.4 2.4 0 0 0 9.6 9.9"/><path d="M12.2 8.1 A4.2 4.2 0 0 1 11.7 9.9"/><path d="M3.8 8.1 A4.2 4.2 0 0 0 10.9 11.2"/><path d="M2.6 2.2 L13.4 13"/></svg><div class="abs" style="left:1588px;top:62px;width:56px;height:4px;border-radius:4px 4px 0 0;background:#b2901c"></div><div class="av" style="left:1600px;top:14px;width:32px;height:32px;filter:grayscale(1);;background:radial-gradient(ellipse 22% 8% at 50% 66%,#171719 0,#171719 45%,transparent 100%),radial-gradient(ellipse 24% 14% at 52% 22%,#5a463a 0,#5a463a 45%,transparent 100%),radial-gradient(ellipse 20% 22% at 52% 50%,#c99f86 0,#c99f86 45%,transparent 100%),radial-gradient(ellipse 48% 26% at 50% 100%,#1b1b1d 0,#1b1b1d 45%,transparent 100%),radial-gradient(ellipse 16% 40% at 12% 40%,#c4c6c8 0,#c4c6c8 45%,transparent 100%),#a4a6a8"></div><div class="abs" style="left:1616px;top:32px;width:28px;height:28px;border-radius:7px;background:#fcdfd9"></div><svg style="left:1620px;top:36px" width="20" height="20" viewBox="0 0 16 16" fill="none" stroke="#d9604f" stroke-width="1.2" stroke-linecap="round" stroke-linejoin="round" ><path d="M8 12.2 V14.3"/><path d="M10.4 6.3 V4.3 A2.4 2.4 0 0 0 5.9 3.2"/><path d="M5.6 5.6 V8.1 A2.4 2.4 0 0 0 9.6 9.9"/><path d="M12.2 8.1 A4.2 4.2 0 0 1 11.7 9.9"/><path d="M3.8 8.1 A4.2 4.2 0 0 0 10.9 11.2"/><path d="M2.6 2.2 L13.4 13"/></svg><div class="abs" style="left:1652px;top:62px;width:56px;height:4px;border-radius:4px 4px 0 0;background:#5aa255"></div><div class="av" style="left:1664px;top:14px;width:32px;height:32px;filter:grayscale(1);;background:radial-gradient(ellipse 11% 12% at 52% 32%,#5b3f33 0,#5b3f33 45%,transparent 100%),radial-gradient(ellipse 7% 26% at 52% 70%,#e4e6ea 0,#e4e6ea 45%,transparent 100%),radial-gradient(ellipse 17% 32% at 52% 66%,#4d4f4a 0,#4d4f4a 45%,transparent 100%),radial-gradient(ellipse 40% 20% at 50% 95%,#4a4a44 0,#4a4a44 45%,transparent 100%),radial-gradient(ellipse 20% 30% at 12% 45%,#8d8a5e 0,#8d8a5e 45%,transparent 100%),radial-gradient(ellipse 22% 34% at 85% 45%,#d88a1e 0,#d88a1e 45%,transparent 100%),radial-gradient(ellipse 30% 22% at 40% 12%,#b9d3ea 0,#b9d3ea 45%,transparent 100%),#8f8a70"></div><div class="abs" style="left:1680px;top:32px;width:28px;height:28px;border-radius:7px;background:#fcdfd9"></div><svg style="left:1684px;top:36px" width="20" height="20" viewBox="0 0 16 16" fill="none" stroke="#d9604f" stroke-width="1.2" stroke-linecap="round" stroke-linejoin="round" ><path d="M8 12.2 V14.3"/><path d="M10.4 6.3 V4.3 A2.4 2.4 0 0 0 5.9 3.2"/><path d="M5.6 5.6 V8.1 A2.4 2.4 0 0 0 9.6 9.9"/><path d="M12.2 8.1 A4.2 4.2 0 0 1 11.7 9.9"/><path d="M3.8 8.1 A4.2 4.2 0 0 0 10.9 11.2"/><path d="M2.6 2.2 L13.4 13"/></svg><div class="abs" style="left:1716px;top:62px;width:56px;height:4px;border-radius:4px 4px 0 0;background:#a24eb4"></div><div class="av" style="left:1728px;top:14px;width:32px;height:32px;filter:grayscale(1);;background:radial-gradient(ellipse 26% 16% at 42% 22%,#5b3418 0,#5b3418 45%,transparent 100%),radial-gradient(ellipse 20% 24% at 48% 55%,#e9b99a 0,#e9b99a 45%,transparent 100%),radial-gradient(ellipse 44% 24% at 50% 100%,#2f5f8f 0,#2f5f8f 45%,transparent 100%),radial-gradient(ellipse 26% 26% at 80% 30%,#e8842d 0,#e8842d 45%,transparent 100%),radial-gradient(ellipse 16% 40% at 10% 55%,#5f8aa0 0,#5f8aa0 45%,transparent 100%),#d8722a"></div><div class="abs" style="left:1744px;top:32px;width:28px;height:28px;border-radius:7px;background:#fcdfd9"></div><svg style="left:1748px;top:36px" width="20" height="20" viewBox="0 0 16 16" fill="none" stroke="#d9604f" stroke-width="1.2" stroke-linecap="round" stroke-linejoin="round" ><path d="M8 12.2 V14.3"/><path d="M10.4 6.3 V4.3 A2.4 2.4 0 0 0 5.9 3.2"/><path d="M5.6 5.6 V8.1 A2.4 2.4 0 0 0 9.6 9.9"/><path d="M12.2 8.1 A4.2 4.2 0 0 1 11.7 9.9"/><path d="M3.8 8.1 A4.2 4.2 0 0 0 10.9 11.2"/><path d="M2.6 2.2 L13.4 13"/></svg><div class="abs" style="left:1780px;top:62px;width:56px;height:4px;border-radius:4px 4px 0 0;background:#b8742a"></div><div class="av" style="left:1792px;top:14px;width:32px;height:32px;filter:grayscale(1);;background:radial-gradient(ellipse 10% 22% at 40% 60%,#17141a 0,#17141a 45%,transparent 100%),radial-gradient(ellipse 15% 9% at 58% 28%,#141214 0,#141214 45%,transparent 100%),radial-gradient(ellipse 12% 15% at 58% 40%,#e6c3ae 0,#e6c3ae 45%,transparent 100%),radial-gradient(ellipse 18% 20% at 70% 90%,#9d97a5 0,#9d97a5 45%,transparent 100%),radial-gradient(ellipse 34% 24% at 35% 95%,#b9b3bf 0,#b9b3bf 45%,transparent 100%),#0c0c0e"></div><div class="abs" style="left:1808px;top:32px;width:28px;height:28px;border-radius:7px;background:#fcdfd9"></div><svg style="left:1812px;top:36px" width="20" height="20" viewBox="0 0 16 16" fill="none" stroke="#d9604f" stroke-width="1.2" stroke-linecap="round" stroke-linejoin="round" ><path d="M8 12.2 V14.3"/><path d="M10.4 6.3 V4.3 A2.4 2.4 0 0 0 5.9 3.2"/><path d="M5.6 5.6 V8.1 A2.4 2.4 0 0 0 9.6 9.9"/><path d="M12.2 8.1 A4.2 4.2 0 0 1 11.7 9.9"/><path d="M3.8 8.1 A4.2 4.2 0 0 0 10.9 11.2"/><path d="M2.6 2.2 L13.4 13"/></svg><div class="abs" style="left:1844px;top:62px;width:56px;height:4px;border-radius:4px 4px 0 0;background:#a24eb4"></div><div class="av" style="left:1856px;top:14px;width:32px;height:32px;filter:grayscale(1);;background:radial-gradient(ellipse 18% 3% at 58% 38%,#3a3030 0,#3a3030 45%,transparent 100%),radial-gradient(ellipse 22% 10% at 58% 16%,#4a3a30 0,#4a3a30 45%,transparent 100%),radial-gradient(ellipse 22% 26% at 58% 45%,#e2bfa8 0,#e2bfa8 45%,transparent 100%),radial-gradient(ellipse 40% 22% at 60% 95%,#b9b9b9 0,#b9b9b9 45%,transparent 100%),radial-gradient(ellipse 16% 50% at 14% 50%,#f3f3f3 0,#f3f3f3 45%,transparent 100%),#dcdcdc"></div><div class="abs" style="left:1872px;top:32px;width:28px;height:28px;border-radius:7px;background:#fcdfd9"></div><svg style="left:1876px;top:36px" width="20" height="20" viewBox="0 0 16 16" fill="none" stroke="#d9604f" stroke-width="1.2" stroke-linecap="round" stroke-linejoin="round" ><path d="M8 12.2 V14.3"/><path d="M10.4 6.3 V4.3 A2.4 2.4 0 0 0 5.9 3.2"/><path d="M5.6 5.6 V8.1 A2.4 2.4 0 0 0 9.6 9.9"/><path d="M12.2 8.1 A4.2 4.2 0 0 1 11.7 9.9"/><path d="M3.8 8.1 A4.2 4.2 0 0 0 10.9 11.2"/><path d="M2.6 2.2 L13.4 13"/></svg><div class="abs" style="left:1908px;top:62px;width:56px;height:4px;border-radius:4px 4px 0 0;background:#3a83c0"></div><div class="av" style="left:1920px;top:14px;width:32px;height:32px;filter:grayscale(1);;background:radial-gradient(ellipse 18% 5% at 22% 45%,#3c4038 0,#3c4038 45%,transparent 100%),radial-gradient(ellipse 8% 10% at 50% 40%,#7a5a48 0,#7a5a48 45%,transparent 100%),radial-gradient(ellipse 16% 30% at 50% 75%,#3c4038 0,#3c4038 45%,transparent 100%),radial-gradient(ellipse 20% 30% at 85% 30%,#4a5636 0,#4a5636 45%,transparent 100%),radial-gradient(ellipse 22% 26% at 15% 30%,#8a9468 0,#8a9468 45%,transparent 100%),#5e6a44"></div><div class="abs" style="left:1936px;top:32px;width:28px;height:28px;border-radius:7px;background:#fcdfd9"></div><svg style="left:1940px;top:36px" width="20" height="20" viewBox="0 0 16 16" fill="none" stroke="#d9604f" stroke-width="1.2" stroke-linecap="round" stroke-linejoin="round" ><path d="M8 12.2 V14.3"/><path d="M10.4 6.3 V4.3 A2.4 2.4 0 0 0 5.9 3.2"/><path d="M5.6 5.6 V8.1 A2.4 2.4 0 0 0 9.6 9.9"/><path d="M12.2 8.1 A4.2 4.2 0 0 1 11.7 9.9"/><path d="M3.8 8.1 A4.2 4.2 0 0 0 10.9 11.2"/><path d="M2.6 2.2 L13.4 13"/></svg><div class="abs" style="left:1972px;top:62px;width:56px;height:4px;border-radius:4px 4px 0 0;background:#d65c4c"></div><div class="av" style="left:1984px;top:14px;width:32px;height:32px;filter:grayscale(1);;background:#000"><span class="t" style="left:0;width:32px;text-align:center;top:9.3px;font-size:11.5px;font-weight:bold;color:#fff;letter-spacing:-0.3px">yes.</span></div><div class="abs" style="left:2000px;top:32px;width:28px;height:28px;border-radius:7px;background:#fcdfd9"></div><svg style="left:2004px;top:36px" width="20" height="20" viewBox="0 0 16 16" fill="none" stroke="#d9604f" stroke-width="1.2" stroke-linecap="round" stroke-linejoin="round" ><path d="M8 12.2 V14.3"/><path d="M10.4 6.3 V4.3 A2.4 2.4 0 0 0 5.9 3.2"/><path d="M5.6 5.6 V8.1 A2.4 2.4 0 0 0 9.6 9.9"/><path d="M12.2 8.1 A4.2 4.2 0 0 1 11.7 9.9"/><path d="M3.8 8.1 A4.2 4.2 0 0 0 10.9 11.2"/><path d="M2.6 2.2 L13.4 13"/></svg><div class="abs" style="left:2036px;top:62px;width:56px;height:4px;border-radius:4px 4px 0 0;background:#b2901c"></div><div class="av" style="left:2048px;top:14px;width:32px;height:32px;filter:grayscale(1);;background:#171718"><svg width="32" height="32" viewBox="0 0 32 32" style="left:0;top:0" fill="none" stroke="#4a4a4c" stroke-width="0.6"><circle cx="16" cy="16" r="9"/><circle cx="16" cy="16" r="6" stroke-dasharray="1 1.2"/><path d="M9 11 L16 24 L23 11 Z"/></svg></div><div class="abs" style="left:2064px;top:32px;width:28px;height:28px;border-radius:7px;background:#fcdfd9"></div><svg style="left:2068px;top:36px" width="20" height="20" viewBox="0 0 16 16" fill="none" stroke="#d9604f" stroke-width="1.2" stroke-linecap="round" stroke-linejoin="round" ><path d="M8 12.2 V14.3"/><path d="M10.4 6.3 V4.3 A2.4 2.4 0 0 0 5.9 3.2"/><path d="M5.6 5.6 V8.1 A2.4 2.4 0 0 0 9.6 9.9"/><path d="M12.2 8.1 A4.2 4.2 0 0 1 11.7 9.9"/><path d="M3.8 8.1 A4.2 4.2 0 0 0 10.9 11.2"/><path d="M2.6 2.2 L13.4 13"/></svg><svg style="left:2576.3px;top:20px" width="28" height="28" viewBox="0 0 16 16" fill="none" stroke="#242529" stroke-width="1.2" stroke-linecap="round" stroke-linejoin="round" ><path d="M6.6 13.4 H4.3 A1.6 1.6 0 0 1 2.7 11.8 V4.2 A1.6 1.6 0 0 1 4.3 2.6 H6.6"/><path d="M7.6 8 H13.2 M10.5 5.2 L13.3 8 L10.5 10.8"/></svg><div class="abs" style="left:2620px;top:12px;width:2px;height:44px;background:#cfcfd0"></div><span class="t" style="left:2638.8px;top:20.48px;font-size:24px;line-height:29px;color:#242529;letter-spacing:-0.7px">Share</span><div class="abs" style="left:2718px;top:12px;width:44px;height:44px;border-radius:8px;background:#fcdfd9"></div><svg style="left:2726px;top:20px" width="28" height="28" viewBox="0 0 16 16" fill="none" stroke="#d9604f" stroke-width="1.2" stroke-linecap="round" stroke-linejoin="round" ><path d="M8 12.2 V14.3"/><path d="M10.4 6.3 V4.3 A2.4 2.4 0 0 0 5.9 3.2"/><path d="M5.6 5.6 V8.1 A2.4 2.4 0 0 0 9.6 9.9"/><path d="M12.2 8.1 A4.2 4.2 0 0 1 11.7 9.9"/><path d="M3.8 8.1 A4.2 4.2 0 0 0 10.9 11.2"/><path d="M2.6 2.2 L13.4 13"/></svg><svg style="left:2778.6px;top:20px" width="28" height="28" viewBox="0 0 16 16" fill="none" stroke="#242529" stroke-width="1.2" stroke-linecap="round" stroke-linejoin="round" ><path d="M7.4 3.2 L4.6 5.9 H2.9 A0.7 0.7 0 0 0 2.2 6.6 V9.4 A0.7 0.7 0 0 0 2.9 10.1 H4.6 L7.4 12.8 Z" fill="currentColor" fill-opacity="0.08"/><path d="M10 6 A2.8 2.8 0 0 1 10 10"/><path d="M12 4.2 A5.4 5.4 0 0 1 12 11.8"/></svg><svg style="left:2830px;top:20.5px" width="28" height="28" viewBox="0 0 16 16" fill="none" stroke="#242529" stroke-width="1.2" stroke-linecap="round" stroke-linejoin="round" ><rect x="2" y="2.5" width="12" height="8.1" rx="1.6" fill="currentColor" fill-opacity="0.08"/><path d="M8 10.6 V13.4 M4.9 13.4 H11.1"/></svg><div class="abs" style="left:2866px;top:12px;width:2px;height:44px;background:#d6d6d7"></div><svg style="left:2870px;top:20px" width="28" height="28" viewBox="0 0 16 16" fill="none" stroke="#242529" stroke-width="1.2" stroke-linecap="round" stroke-linejoin="round" ><path d="M4.6 6.4 L8 9.8 L11.4 6.4"/></svg><div class="av" style="left:2940px;top:18px;width:32px;height:32px;;background:radial-gradient(ellipse 21% 23% at 52% 42%,#e2b08e 0,#e2b08e 45%,transparent 100%),radial-gradient(ellipse 16% 26% at 78% 62%,#5a2e20 0,#5a2e20 45%,transparent 100%),radial-gradient(ellipse 16% 26% at 22% 62%,#5a2e20 0,#5a2e20 45%,transparent 100%),radial-gradient(ellipse 45% 26% at 50% 92%,#3b1e1a 0,#3b1e1a 45%,transparent 100%),radial-gradient(ellipse 30% 16% at 50% 10%,#9c8a74 0,#9c8a74 45%,transparent 100%),radial-gradient(ellipse 20% 30% at 90% 40%,#e9e2d4 0,#e9e2d4 45%,transparent 100%),radial-gradient(ellipse 22% 30% at 12% 40%,#c9792f 0,#c9792f 45%,transparent 100%),#8b5a3c"></div></div>
<div id="side">
<span class="t" style="left:16px;top:10.90px;font-size:28px;line-height:34px;color:#58585a;">demos</span><div class="abs" style="left:35px;top:56px;width:2px;height:52px;background:#242529"></div><div class="abs" style="left:35px;top:81px;width:25px;height:2px;background:#242529"></div><svg style="left:76px;top:66px" width="32" height="32" viewBox="0 0 16 16" fill="none" stroke="#242529" stroke-width="1.2" stroke-linecap="round" stroke-linejoin="round" ><path d="M9.4 2.1 H4.5 A1.5 1.5 0 0 0 3 3.6 V12.4 A1.5 1.5 0 0 0 4.5 13.9 H11.5 A1.5 1.5 0 0 0 13 12.4 V5.8 Z"/><path d="M9.3 2.2 V4.6 A1.2 1.2 0 0 0 10.5 5.8 H12.9"/></svg><span class="t" style="left:129px;top:64.80px;font-size:28px;line-height:34px;color:#242529;">notes</span><div class="av" style="left:12px;top:115px;width:32px;height:32px;;background:radial-gradient(ellipse 21% 23% at 52% 42%,#e2b08e 0,#e2b08e 45%,transparent 100%),radial-gradient(ellipse 16% 26% at 78% 62%,#5a2e20 0,#5a2e20 45%,transparent 100%),radial-gradient(ellipse 16% 26% at 22% 62%,#5a2e20 0,#5a2e20 45%,transparent 100%),radial-gradient(ellipse 45% 26% at 50% 92%,#3b1e1a 0,#3b1e1a 45%,transparent 100%),radial-gradient(ellipse 30% 16% at 50% 10%,#9c8a74 0,#9c8a74 45%,transparent 100%),radial-gradient(ellipse 20% 30% at 90% 40%,#e9e2d4 0,#e9e2d4 45%,transparent 100%),radial-gradient(ellipse 22% 30% at 12% 40%,#c9792f 0,#c9792f 45%,transparent 100%),#8b5a3c"></div><div class="abs" style="left:57px;top:111px;width:356px;height:40px;overflow:hidden"><span class="t" style="left:0px;top:2.80px;font-size:28px;line-height:34px;color:#242529;letter-spacing:-0.56px">Joseph T. Lyons (JosephTLyons)</span></div><div class="av" style="left:12px;top:160px;width:32px;height:32px;;background:radial-gradient(ellipse 11% 12% at 52% 32%,#5b3f33 0,#5b3f33 45%,transparent 100%),radial-gradient(ellipse 7% 26% at 52% 70%,#e4e6ea 0,#e4e6ea 45%,transparent 100%),radial-gradient(ellipse 17% 32% at 52% 66%,#4d4f4a 0,#4d4f4a 45%,transparent 100%),radial-gradient(ellipse 40% 20% at 50% 95%,#4a4a44 0,#4a4a44 45%,transparent 100%),radial-gradient(ellipse 20% 30% at 12% 45%,#8d8a5e 0,#8d8a5e 45%,transparent 100%),radial-gradient(ellipse 22% 34% at 85% 45%,#d88a1e 0,#d88a1e 45%,transparent 100%),radial-gradient(ellipse 30% 22% at 40% 12%,#b9d3ea 0,#b9d3ea 45%,transparent 100%),#8f8a70"></div><div class="abs" style="left:57px;top:156px;width:404px;height:40px;overflow:hidden"><span class="t" style="left:0px;top:2.80px;font-size:28px;line-height:34px;color:#242529;letter-spacing:-0.006px">Anthony Eid (Anthony-Eid)</span></div><div class="av" style="left:12px;top:205px;width:32px;height:32px;;background:radial-gradient(ellipse 26% 16% at 42% 22%,#5b3418 0,#5b3418 45%,transparent 100%),radial-gradient(ellipse 20% 24% at 48% 55%,#e9b99a 0,#e9b99a 45%,transparent 100%),radial-gradient(ellipse 44% 24% at 50% 100%,#2f5f8f 0,#2f5f8f 45%,transparent 100%),radial-gradient(ellipse 26% 26% at 80% 30%,#e8842d 0,#e8842d 45%,transparent 100%),radial-gradient(ellipse 16% 40% at 10% 55%,#5f8aa0 0,#5f8aa0 45%,transparent 100%),#d8722a"></div><div class="abs" style="left:57px;top:201px;width:404px;height:40px;overflow:hidden"><span class="t" style="left:0px;top:2.80px;font-size:28px;line-height:34px;color:#242529;letter-spacing:0.223px">Conrad Irwin (ConradIrwin)</span></div><div class="av" style="left:12px;top:250px;width:32px;height:32px;;background:radial-gradient(ellipse 6% 7% at 50% 46%,#050505 0,#050505 92%,transparent 100%),radial-gradient(ellipse 15% 17% at 50% 66%,#050505 0,#050505 92%,transparent 100%),radial-gradient(ellipse 50% 18% at 50% 100%,#050505 0,#050505 92%,transparent 100%),radial-gradient(ellipse 22% 28% at 50% 55%,#f6f0d8 0,#f6f0d8 45%,transparent 100%),radial-gradient(ellipse 26% 45% at 85% 45%,#7a4a22 0,#7a4a22 45%,transparent 100%),radial-gradient(ellipse 12% 40% at 42% 25%,#cfeec8 0,#cfeec8 45%,transparent 100%),radial-gradient(ellipse 28% 45% at 15% 45%,#4f86b8 0,#4f86b8 45%,transparent 100%),#5a4a38"></div><div class="abs" style="left:57px;top:246px;width:404px;height:40px;overflow:hidden"><span class="t" style="left:0px;top:2.80px;font-size:28px;line-height:34px;color:#242529;letter-spacing:-0.374px">Andrew Farkas (HactarCE)</span></div><div class="av" style="left:12px;top:295px;width:32px;height:32px;;border-radius:0;filter:none"><svg width="32" height="32" viewBox="0 0 32 32" style="left:0;top:0"><g fill="#2fa83a"><path d="M17 16 L12 6 L18 11 L20 2 L22 11 L29 5 L25 13 L31 13 L22 18 Z"/></g><ellipse cx="13.5" cy="22" rx="9.5" ry="8" transform="rotate(-35 13.5 22)" fill="#f39a1e"/><g stroke="#d97a10" stroke-width="0.9" fill="none"><path d="M7 20 L16 28 M10 16 L20 25 M6 25 L15 16 M10 29 L21 19"/></g></svg></div><div class="abs" style="left:57px;top:291px;width:404px;height:40px;overflow:hidden"><span class="t" style="left:0px;top:2.80px;font-size:28px;line-height:34px;color:#242529;letter-spacing:-0.066px">Julia Ryan (P1n3appl3)</span></div><div class="av" style="left:12px;top:340px;width:32px;height:32px;;background:radial-gradient(ellipse 50% 12% at 50% 100%,#0c0c0d 0,#0c0c0d 45%,transparent 100%),radial-gradient(ellipse 12% 8% at 22% 78%,#8a6a5c 0,#8a6a5c 45%,transparent 100%),radial-gradient(ellipse 10% 6% at 50% 30%,#3a3a3c 0,#3a3a3c 45%,transparent 100%),radial-gradient(ellipse 9% 11% at 50% 40%,#b98f7a 0,#b98f7a 45%,transparent 100%),radial-gradient(ellipse 18% 22% at 62% 68%,#6f7376 0,#6f7376 45%,transparent 100%),#1f1f21"></div><div class="abs" style="left:57px;top:336px;width:404px;height:40px;overflow:hidden"><span class="t" style="left:0px;top:2.80px;font-size:28px;line-height:34px;color:#242529;letter-spacing:-0.034px">Lukas Wirth (Veykril)</span></div><svg style="left:428.6px;top:115px" width="32" height="32" viewBox="0 0 16 16" fill="none" stroke="#242529" stroke-width="1.2" stroke-linecap="round" stroke-linejoin="round" ><path d="M6.6 13.4 H4.3 A1.6 1.6 0 0 1 2.7 11.8 V4.2 A1.6 1.6 0 0 1 4.3 2.6 H6.6"/><path d="M7.6 8 H13.2 M10.5 5.2 L13.3 8 L10.5 10.8"/></svg><div class="abs" style="left:35px;top:378px;width:2px;height:27px;background:#242529"></div><div class="abs" style="left:35px;top:403px;width:25px;height:2px;background:#242529"></div><svg style="left:76px;top:389px" width="32" height="32" viewBox="0 0 16 16" fill="none" stroke="#242529" stroke-width="1.2" stroke-linecap="round" stroke-linejoin="round" ><rect x="2" y="2.5" width="12" height="8.1" rx="1.6" fill="currentColor" fill-opacity="0.08"/><path d="M8 10.6 V13.4 M4.9 13.4 H11.1"/></svg><span class="t" style="left:129px;top:387.80px;font-size:28px;line-height:34px;color:#242529;letter-spacing:-0.5px">Screen</span><div class="av" style="left:12px;top:437px;width:32px;height:32px;;background:radial-gradient(ellipse 18% 24% at 53% 50%,#e0ab88 0,#e0ab88 45%,transparent 100%),radial-gradient(ellipse 24% 14% at 52% 18%,#5a3018 0,#5a3018 45%,transparent 100%),radial-gradient(ellipse 16% 34% at 78% 45%,#4a2616 0,#4a2616 45%,transparent 100%),radial-gradient(ellipse 16% 34% at 28% 45%,#4a2616 0,#4a2616 45%,transparent 100%),radial-gradient(ellipse 44% 18% at 50% 98%,#2b1a14 0,#2b1a14 45%,transparent 100%),radial-gradient(ellipse 20% 30% at 10% 30%,#c98d4e 0,#c98d4e 45%,transparent 100%),#a86e3c"></div><div class="abs" style="left:57px;top:433px;width:403px;height:40px;overflow:hidden"><span class="t" style="left:0px;top:2.80px;font-size:28px;line-height:34px;color:#242529;letter-spacing:-0.438px">Agus Zubiaga (agu-z)</span></div><div class="av" style="left:12px;top:482px;width:32px;height:32px;;background:radial-gradient(ellipse 22% 12% at 50% 24%,#1c1512 0,#1c1512 45%,transparent 100%),radial-gradient(ellipse 18% 22% at 50% 52%,#a8653f 0,#a8653f 45%,transparent 100%),radial-gradient(ellipse 46% 30% at 50% 100%,#e23a3a 0,#e23a3a 45%,transparent 100%),radial-gradient(ellipse 14% 40% at 88% 40%,#d8c440 0,#d8c440 45%,transparent 100%),radial-gradient(ellipse 16% 40% at 12% 40%,#8f7f1e 0,#8f7f1e 45%,transparent 100%),#b8a227"></div><div class="abs" style="left:57px;top:478px;width:403px;height:40px;overflow:hidden"><span class="t" style="left:0px;top:2.80px;font-size:28px;line-height:34px;color:#242529;letter-spacing:0.012px">Antonio Scandurra (as-cii)</span></div><div class="av" style="left:12px;top:527px;width:32px;height:32px;;background:radial-gradient(ellipse 18% 3% at 58% 38%,#3a3030 0,#3a3030 45%,transparent 100%),radial-gradient(ellipse 22% 10% at 58% 16%,#4a3a30 0,#4a3a30 45%,transparent 100%),radial-gradient(ellipse 22% 26% at 58% 45%,#e2bfa8 0,#e2bfa8 45%,transparent 100%),radial-gradient(ellipse 40% 22% at 60% 95%,#b9b9b9 0,#b9b9b9 45%,transparent 100%),radial-gradient(ellipse 16% 50% at 14% 50%,#f3f3f3 0,#f3f3f3 45%,transparent 100%),#dcdcdc"></div><div class="abs" style="left:57px;top:523px;width:403px;height:40px;overflow:hidden"><span class="t" style="left:0px;top:2.80px;font-size:28px;line-height:34px;color:#242529;letter-spacing:0.126px">Ben Brandt (benbrandt)</span></div><div class="av" style="left:12px;top:572px;width:32px;height:32px;;background:radial-gradient(ellipse 24% 13% at 46% 24%,#2c2420 0,#2c2420 45%,transparent 100%),radial-gradient(ellipse 19% 24% at 47% 52%,#c9a58d 0,#c9a58d 45%,transparent 100%),radial-gradient(ellipse 46% 22% at 45% 100%,#3a332e 0,#3a332e 45%,transparent 100%),radial-gradient(ellipse 14% 50% at 10% 50%,#8a8a8c 0,#8a8a8c 45%,transparent 100%),radial-gradient(ellipse 18% 50% at 88% 50%,#e3e3e6 0,#e3e3e6 45%,transparent 100%),#9a9a9c"></div><div class="abs" style="left:57px;top:568px;width:403px;height:40px;overflow:hidden"><span class="t" style="left:0px;top:2.80px;font-size:28px;line-height:34px;color:#242529;letter-spacing:0px">Cameron Mcloughlin (cameron1024)</span></div><div class="av" style="left:12px;top:617px;width:32px;height:32px;;filter:none"><svg width="32" height="32" viewBox="0 0 32 32" style="left:0;top:0"><circle cx="16.0" cy="16.0" r="16.0" fill="#6668ee"/><g fill="#ffffff"><circle cx="1.5" cy="14.5" r="0.87"/><circle cx="4.4" cy="8.7" r="0.87"/><circle cx="2.9" cy="11.6" r="0.87"/><circle cx="4.4" cy="14.5" r="0.87"/><circle cx="2.9" cy="17.5" r="0.87"/><circle cx="4.4" cy="20.4" r="0.87"/><circle cx="5.8" cy="5.8" r="0.87"/><circle cx="7.3" cy="8.7" r="0.87"/><circle cx="5.8" cy="11.6" r="0.87"/><circle cx="7.3" cy="14.5" r="0.87"/><circle cx="5.8" cy="17.5" r="0.87"/><circle cx="7.3" cy="20.4" r="0.87"/><circle cx="5.8" cy="23.3" r="0.87"/><circle cx="7.3" cy="26.2" r="0.87"/><circle cx="10.2" cy="2.9" r="0.87"/><circle cx="8.7" cy="5.8" r="0.87"/><circle cx="10.2" cy="8.7" r="0.87"/><circle cx="8.7" cy="11.6" r="0.87"/><circle cx="10.2" cy="14.5" r="0.87"/><circle cx="8.7" cy="17.5" r="0.87"/><circle cx="10.2" cy="20.4" r="0.87"/><circle cx="8.7" cy="23.3" r="0.87"/><circle cx="10.2" cy="26.2" r="0.87"/><circle cx="13.1" cy="2.9" r="0.87"/><circle cx="11.6" cy="5.8" r="0.87"/><circle cx="13.1" cy="8.7" r="0.87"/><circle cx="11.6" cy="11.6" r="0.87"/><circle cx="13.1" cy="14.5" r="0.87"/><circle cx="11.6" cy="17.5" r="0.87"/><circle cx="13.1" cy="20.4" r="0.87"/><circle cx="11.6" cy="23.3" r="0.87"/><circle cx="13.1" cy="26.2" r="0.87"/><circle cx="11.6" cy="29.1" r="0.87"/><circle cx="16.0" cy="2.9" r="0.87"/><circle cx="14.5" cy="5.8" r="0.87"/><circle cx="16.0" cy="8.7" r="0.87"/><circle cx="14.5" cy="11.6" r="0.87"/><circle cx="16.0" cy="14.5" r="0.87"/><circle cx="14.5" cy="17.5" r="0.87"/><circle cx="16.0" cy="20.4" r="0.87"/><circle cx="14.5" cy="23.3" r="0.87"/><circle cx="16.0" cy="26.2" r="0.87"/><circle cx="14.5" cy="29.1" r="0.87"/><circle cx="18.9" cy="2.9" r="0.87"/><circle cx="17.5" cy="5.8" r="0.87"/><circle cx="18.9" cy="8.7" r="0.87"/><circle cx="17.5" cy="11.6" r="0.87"/><circle cx="18.9" cy="14.5" r="0.87"/><circle cx="17.5" cy="17.5" r="0.87"/><circle cx="18.9" cy="20.4" r="0.87"/><circle cx="17.5" cy="23.3" r="0.87"/><circle cx="18.9" cy="26.2" r="0.87"/><circle cx="17.5" cy="29.1" r="0.87"/><circle cx="21.8" cy="2.9" r="0.87"/><circle cx="20.4" cy="5.8" r="0.87"/><circle cx="21.8" cy="8.7" r="0.87"/><circle cx="20.4" cy="11.6" r="0.87"/><circle cx="21.8" cy="14.5" r="0.87"/><circle cx="20.4" cy="17.5" r="0.87"/><circle cx="21.8" cy="20.4" r="0.87"/><circle cx="20.4" cy="23.3" r="0.87"/><circle cx="21.8" cy="26.2" r="0.87"/><circle cx="20.4" cy="29.1" r="0.87"/><circle cx="23.3" cy="5.8" r="0.87"/><circle cx="24.7" cy="8.7" r="0.87"/><circle cx="23.3" cy="11.6" r="0.87"/><circle cx="24.7" cy="14.5" r="0.87"/><circle cx="23.3" cy="17.5" r="0.87"/><circle cx="24.7" cy="20.4" r="0.87"/><circle cx="23.3" cy="23.3" r="0.87"/><circle cx="24.7" cy="26.2" r="0.87"/><circle cx="26.2" cy="5.8" r="0.87"/><circle cx="27.6" cy="8.7" r="0.87"/><circle cx="26.2" cy="11.6" r="0.87"/><circle cx="27.6" cy="14.5" r="0.87"/><circle cx="26.2" cy="17.5" r="0.87"/><circle cx="27.6" cy="20.4" r="0.87"/><circle cx="26.2" cy="23.3" r="0.87"/><circle cx="29.1" cy="11.6" r="0.87"/><circle cx="30.5" cy="14.5" r="0.87"/><circle cx="29.1" cy="17.5" r="0.87"/></g></svg></div><div class="abs" style="left:57px;top:613px;width:403px;height:40px;overflow:hidden"><span class="t" style="left:0px;top:2.80px;font-size:28px;line-height:34px;color:#242529;letter-spacing:0.238px">Cole Miller (cole-miller)</span></div><div class="av" style="left:12px;top:662px;width:32px;height:32px;;background:radial-gradient(ellipse 17% 9% at 50% 36%,#33363b 0,#33363b 45%,transparent 100%),radial-gradient(ellipse 15% 18% at 50% 55%,#b88d74 0,#b88d74 45%,transparent 100%),radial-gradient(ellipse 44% 26% at 50% 100%,#2f3338 0,#2f3338 45%,transparent 100%),radial-gradient(ellipse 50% 12% at 50% 45%,#6f8fb0 0,#6f8fb0 45%,transparent 100%),radial-gradient(ellipse 50% 18% at 50% 12%,#d9dde2 0,#d9dde2 45%,transparent 100%),#8fb0cf"></div><div class="abs" style="left:57px;top:658px;width:403px;height:40px;overflow:hidden"><span class="t" style="left:0px;top:2.80px;font-size:28px;line-height:34px;color:#242529;letter-spacing:0.049px">Danilo Leal (danilo-leal)</span></div><div class="av" style="left:12px;top:707px;width:32px;height:32px;;background:radial-gradient(ellipse 44% 26% at 50% 100%,#101012 0,#101012 45%,transparent 100%),radial-gradient(ellipse 9% 11% at 50% 36%,#b48d78 0,#b48d78 45%,transparent 100%),radial-gradient(ellipse 16% 20% at 50% 60%,#18181a 0,#18181a 45%,transparent 100%),radial-gradient(ellipse 50% 6% at 50% 40%,#39383a 0,#39383a 45%,transparent 100%),radial-gradient(ellipse 50% 8% at 50% 20%,#3b3a3c 0,#3b3a3c 45%,transparent 100%),#232224"></div><div class="abs" style="left:57px;top:703px;width:403px;height:40px;overflow:hidden"><span class="t" style="left:0px;top:2.80px;font-size:28px;line-height:34px;color:#242529;letter-spacing:-0.055px">Dino (dinocosta)</span></div><div class="av" style="left:12px;top:752px;width:32px;height:32px;;background:radial-gradient(ellipse 13% 8% at 50% 28%,#3d2d22 0,#3d2d22 45%,transparent 100%),radial-gradient(ellipse 12% 15% at 50% 42%,#d3ab92 0,#d3ab92 45%,transparent 100%),radial-gradient(ellipse 42% 32% at 50% 100%,#1d1f26 0,#1d1f26 45%,transparent 100%),radial-gradient(ellipse 20% 30% at 85% 60%,#7d8468 0,#7d8468 45%,transparent 100%),radial-gradient(ellipse 20% 30% at 15% 60%,#8a7f66 0,#8a7f66 45%,transparent 100%),radial-gradient(ellipse 50% 16% at 50% 8%,#c9cdd0 0,#c9cdd0 45%,transparent 100%),#8d8f7c"></div><div class="abs" style="left:57px;top:748px;width:403px;height:40px;overflow:hidden"><span class="t" style="left:0px;top:2.80px;font-size:28px;line-height:34px;color:#242529;letter-spacing:-0.106px">David Kleingeld (dvdsk)</span></div><div class="av" style="left:12px;top:797px;width:32px;height:32px;;background:#f3f3f3"><svg width="32" height="32" viewBox="0 0 32 32" style="left:0;top:0"><path d="M0 6 C5 2 9 4 9 10 C7 16 9 24 12 32 H0 Z" fill="#8f8f8f"/><path d="M2 20 C5 24 8 28 9 32 H0 V20 Z" fill="#3c3c3c"/><g fill="none" stroke="#151515" stroke-width="2.6"><rect x="8.5" y="8.5" width="10.5" height="8.6" rx="3.6"/><rect x="21" y="7.8" width="10" height="8.6" rx="3.6"/></g><path d="M14 22 C18 25.5 23 25 26 21.5" stroke="#9a9a9a" stroke-width="1.2" fill="#fff"/></svg></div><div class="abs" style="left:57px;top:793px;width:403px;height:40px;overflow:hidden"><span class="t" style="left:0px;top:2.80px;font-size:28px;line-height:34px;color:#242529;letter-spacing:0.203px">franciskafyi (franciskafyi)</span></div><div class="av" style="left:12px;top:842px;width:32px;height:32px;;background:radial-gradient(ellipse 12% 18% at 85% 70%,#6b5a4a 0,#6b5a4a 45%,transparent 100%),radial-gradient(ellipse 22% 20% at 62% 78%,#d9a58e 0,#d9a58e 45%,transparent 100%),radial-gradient(ellipse 18% 20% at 20% 80%,#5e5547 0,#5e5547 45%,transparent 100%),radial-gradient(ellipse 50% 30% at 50% 25%,#b59e85 0,#b59e85 45%,transparent 100%),#b49c82"></div><div class="abs" style="left:57px;top:838px;width:403px;height:40px;overflow:hidden"><span class="t" style="left:0px;top:2.80px;font-size:28px;line-height:34px;color:#242529;letter-spacing:-0.266px">Gaauwe Rombouts (gaauwe)</span></div><div class="av" style="left:12px;top:887px;width:32px;height:32px;;background:radial-gradient(ellipse 40% 16% at 50% 95%,#7b8187 0,#7b8187 45%,transparent 100%),radial-gradient(ellipse 22% 8% at 50% 28%,#77726e 0,#77726e 45%,transparent 100%),radial-gradient(ellipse 22% 26% at 50% 50%,#9d948c 0,#9d948c 45%,transparent 100%),radial-gradient(ellipse 14% 44% at 12% 50%,#7d8a9a 0,#7d8a9a 45%,transparent 100%),radial-gradient(ellipse 14% 44% at 88% 50%,#57a8a0 0,#57a8a0 45%,transparent 100%),#8f959a"></div><div class="abs" style="left:57px;top:883px;width:403px;height:40px;overflow:hidden"><span class="t" style="left:0px;top:2.80px;font-size:28px;line-height:34px;color:#242529;letter-spacing:-0.14px">Jakub Konka (kubkon)</span></div><div class="av" style="left:12px;top:932px;width:32px;height:32px;;background:#c9c3bf"><svg width="32" height="32" viewBox="0 0 32 32" style="left:0;top:0"><g fill="#9b6253"><ellipse cx="16" cy="13.5" rx="5.2" ry="6.6"/><rect x="12.6" y="17" width="6.8" height="7"/><path d="M3 32 C4 25 9 23.5 12.6 22.5 H19.4 C23 23.5 28 25 29 32 Z"/></g></svg></div><div class="abs" style="left:57px;top:928px;width:403px;height:40px;overflow:hidden"><span class="t" style="left:0px;top:2.80px;font-size:28px;line-height:34px;color:#242529;letter-spacing:0.472px">Matt Miller (mattermill)</span></div><div class="av" style="left:12px;top:977px;width:32px;height:32px;;background:radial-gradient(ellipse 20% 11% at 50% 24%,#b7b0a3 0,#b7b0a3 45%,transparent 100%),radial-gradient(ellipse 18% 23% at 50% 52%,#e3b597 0,#e3b597 45%,transparent 100%),radial-gradient(ellipse 42% 24% at 50% 100%,#c7c0a8 0,#c7c0a8 45%,transparent 100%),radial-gradient(ellipse 20% 40% at 85% 40%,#7f8a5c 0,#7f8a5c 45%,transparent 100%),radial-gradient(ellipse 24% 34% at 15% 30%,#a6ad88 0,#a6ad88 45%,transparent 100%),#8c9470"></div><div class="abs" style="left:57px;top:973px;width:403px;height:40px;overflow:hidden"><span class="t" style="left:0px;top:2.80px;font-size:28px;line-height:34px;color:#242529;letter-spacing:0.122px">Max Brunsfeld (maxbrunsfeld)</span></div><div class="av" style="left:12px;top:1022px;width:32px;height:32px;;background:#171718"><svg width="32" height="32" viewBox="0 0 32 32" style="left:0;top:0" fill="none" stroke="#4a4a4c" stroke-width="0.6"><circle cx="16" cy="16" r="9"/><circle cx="16" cy="16" r="6" stroke-dasharray="1 1.2"/><path d="M9 11 L16 24 L23 11 Z"/></svg></div><div class="abs" style="left:57px;top:1018px;width:403px;height:40px;overflow:hidden"><span class="t" style="left:0px;top:2.80px;font-size:28px;line-height:34px;color:#242529;letter-spacing:0.041px">Marshall Bowers (maxdeviant)</span></div><div class="av" style="left:12px;top:1067px;width:32px;height:32px;;background:radial-gradient(ellipse 10% 22% at 40% 60%,#17141a 0,#17141a 45%,transparent 100%),radial-gradient(ellipse 15% 9% at 58% 28%,#141214 0,#141214 45%,transparent 100%),radial-gradient(ellipse 12% 15% at 58% 40%,#e6c3ae 0,#e6c3ae 45%,transparent 100%),radial-gradient(ellipse 18% 20% at 70% 90%,#9d97a5 0,#9d97a5 45%,transparent 100%),radial-gradient(ellipse 34% 24% at 35% 95%,#b9b3bf 0,#b9b3bf 45%,transparent 100%),#0c0c0e"></div><div class="abs" style="left:57px;top:1063px;width:403px;height:40px;overflow:hidden"><span class="t" style="left:0px;top:2.80px;font-size:28px;line-height:34px;color:#242529;letter-spacing:-0.054px">mslzed (mslzed)</span></div><div class="av" style="left:12px;top:1112px;width:32px;height:32px;;background:radial-gradient(ellipse 10% 22% at 30% 45%,#6b4a2c 0,#6b4a2c 45%,transparent 100%),radial-gradient(ellipse 27% 17% at 55% 28%,#6b4a2c 0,#6b4a2c 45%,transparent 100%),radial-gradient(ellipse 18% 22% at 55% 55%,#d9a883 0,#d9a883 45%,transparent 100%),radial-gradient(ellipse 40% 20% at 50% 100%,#d8d5c0 0,#d8d5c0 45%,transparent 100%),radial-gradient(ellipse 30% 20% at 20% 85%,#7fc0ef 0,#7fc0ef 45%,transparent 100%),#3f9be8"></div><div class="abs" style="left:57px;top:1108px;width:403px;height:40px;overflow:hidden"><span class="t" style="left:0px;top:2.80px;font-size:28px;line-height:34px;color:#242529;letter-spacing:-0.272px">Oleksiy Syvokon (osyvokon)</span></div><div class="av" style="left:12px;top:1157px;width:32px;height:32px;;background:radial-gradient(ellipse 18% 10% at 50% 24%,#5a3a26 0,#5a3a26 45%,transparent 100%),radial-gradient(ellipse 16% 21% at 50% 48%,#e0ac8e 0,#e0ac8e 45%,transparent 100%),radial-gradient(ellipse 9% 16% at 50% 88%,#e8e8ea 0,#e8e8ea 45%,transparent 100%),radial-gradient(ellipse 46% 30% at 50% 100%,#15171b 0,#15171b 45%,transparent 100%),#2b2f36"></div><div class="abs" style="left:57px;top:1153px;width:403px;height:40px;overflow:hidden"><span class="t" style="left:0px;top:2.80px;font-size:28px;line-height:34px;color:#242529;letter-spacing:0.088px">Ben Kunkle (probably-neb)</span></div><div class="av" style="left:12px;top:1202px;width:32px;height:32px;;background:radial-gradient(ellipse 22% 8% at 50% 66%,#171719 0,#171719 45%,transparent 100%),radial-gradient(ellipse 24% 14% at 52% 22%,#5a463a 0,#5a463a 45%,transparent 100%),radial-gradient(ellipse 20% 22% at 52% 50%,#c99f86 0,#c99f86 45%,transparent 100%),radial-gradient(ellipse 48% 26% at 50% 100%,#1b1b1d 0,#1b1b1d 45%,transparent 100%),radial-gradient(ellipse 16% 40% at 12% 40%,#c4c6c8 0,#c4c6c8 45%,transparent 100%),#a4a6a8"></div><div class="abs" style="left:57px;top:1198px;width:403px;height:40px;overflow:hidden"><span class="t" style="left:0px;top:2.80px;font-size:28px;line-height:34px;color:#242529;letter-spacing:0.151px">John Tur (reflectronic)</span></div><div class="av" style="left:12px;top:1247px;width:32px;height:32px;;background:radial-gradient(ellipse 14% 9% at 50% 66%,#a8613f 0,#a8613f 45%,transparent 100%),radial-gradient(ellipse 18% 24% at 50% 45%,#e2aa8c 0,#e2aa8c 45%,transparent 100%),radial-gradient(ellipse 8% 14% at 50% 90%,#c9ccd0 0,#c9ccd0 45%,transparent 100%),radial-gradient(ellipse 46% 26% at 50% 100%,#2b2d30 0,#2b2d30 45%,transparent 100%),#3a3d40"></div><div class="abs" style="left:57px;top:1243px;width:403px;height:40px;overflow:hidden"><span class="t" style="left:0px;top:2.80px;font-size:28px;line-height:34px;color:#242529;letter-spacing:0.095px">Richard Feldman (rtfeldman)</span></div><div class="av" style="left:12px;top:1292px;width:32px;height:32px;;background:radial-gradient(ellipse 18% 5% at 22% 45%,#3c4038 0,#3c4038 45%,transparent 100%),radial-gradient(ellipse 8% 10% at 50% 40%,#7a5a48 0,#7a5a48 45%,transparent 100%),radial-gradient(ellipse 16% 30% at 50% 75%,#3c4038 0,#3c4038 45%,transparent 100%),radial-gradient(ellipse 20% 30% at 85% 30%,#4a5636 0,#4a5636 45%,transparent 100%),radial-gradient(ellipse 22% 26% at 15% 30%,#8a9468 0,#8a9468 45%,transparent 100%),#5e6a44"></div><div class="abs" style="left:57px;top:1288px;width:403px;height:40px;overflow:hidden"><span class="t" style="left:0px;top:2.80px;font-size:28px;line-height:34px;color:#242529;letter-spacing:0.042px">Smit Barmase (smitbarmase)</span></div><div class="av" style="left:12px;top:1337px;width:32px;height:32px;;background:#000"><span class="t" style="left:0;width:32px;text-align:center;top:9.3px;font-size:11.5px;font-weight:bold;color:#fff;letter-spacing:-0.3px">yes.</span></div><div class="abs" style="left:57px;top:1333px;width:403px;height:40px;overflow:hidden"><span class="t" style="left:0px;top:2.80px;font-size:28px;line-height:34px;color:#242529;letter-spacing:-0.354px">Lena (zelenenka)</span></div><span class="t" style="left:16px;top:1385.80px;font-size:28px;line-height:34px;color:#58585a;letter-spacing:-0.25px">Channels</span><svg style="left:423.7px;top:1387px" width="32" height="32" viewBox="0 0 16 16" fill="none" stroke="#242529" stroke-width="1.2" stroke-linecap="round" stroke-linejoin="round" ><path d="M8 3 V13 M3 8 H13"/></svg><svg style="left:51px;top:1439px" width="32" height="32" viewBox="0 0 16 16" fill="none" stroke="#58585a" stroke-width="1.2" stroke-linecap="round" stroke-linejoin="round" ><path d="M4.1 3.6 A8.3 8.3 0 0 1 12.4 11.9"/><path d="M4.1 6.5 A5.4 5.4 0 0 1 9.5 11.9"/><path d="M4.1 9.5 A2.4 2.4 0 0 1 6.5 11.9"/></svg><span class="t" style="left:92.4px;top:1437.90px;font-size:28px;line-height:34px;color:#242529;">zed</span><div class="av" style="left:145.8px;top:1439px;width:32px;height:32px;;background:linear-gradient(#14100f,#14100f) 0 100%/100% 36% no-repeat,radial-gradient(ellipse 60% 30% at 50% 30%,#eaa868 0,#eaa868 45%,transparent 100%),radial-gradient(ellipse 22% 20% at 50% 48%,#fbe3b4 0,#fbe3b4 45%,transparent 100%),#e09a5c"><div class="abs" style="left:41%;top:42%;width:7%;height:24%;background:#1a1210;border-radius:40% 40% 0 0"></div><div class="abs" style="left:53%;top:38%;width:8%;height:28%;background:#1a1210;border-radius:40% 40% 0 0"></div></div><svg style="left:89px;top:1487.5px" width="32" height="32" viewBox="0 0 16 16" fill="none" stroke="#58585a" stroke-width="1.2" stroke-linecap="round" stroke-linejoin="round" ><path d="M5 6 H12.6 M3.6 9.8 H11.1 M7.7 3.8 L5.4 12.2 M11.9 3.8 L9.6 12.2"/></svg><div class="abs" style="left:109.8px;top:1487px;width:12px;height:12px;border-radius:50%;background:#5a78e1"></div><span class="t" style="left:132.7px;top:1485.90px;font-size:28px;line-height:34px;color:#242529;letter-spacing:0.27px">this week</span><svg style="left:129px;top:1535.5px" width="32" height="32" viewBox="0 0 16 16" fill="none" stroke="#58585a" stroke-width="1.2" stroke-linecap="round" stroke-linejoin="round" ><path d="M5 6 H12.6 M3.6 9.8 H11.1 M7.7 3.8 L5.4 12.2 M11.9 3.8 L9.6 12.2"/></svg><div class="abs" style="left:149.8px;top:1535px;width:12px;height:12px;border-radius:50%;background:#5a78e1"></div><span class="t" style="left:172.7px;top:1533.90px;font-size:28px;line-height:34px;color:#242529;letter-spacing:0.29px">retrospectives</span><div class="abs" style="left:0;top:1575px;width:478px;height:48px;background:#cfcfd0"></div><svg style="left:129px;top:1583.5px" width="32" height="32" viewBox="0 0 16 16" fill="none" stroke="#58585a" stroke-width="1.2" stroke-linecap="round" stroke-linejoin="round" ><path d="M5 6 H12.6 M3.6 9.8 H11.1 M7.7 3.8 L5.4 12.2 M11.9 3.8 L9.6 12.2"/></svg><span class="t" style="left:172.7px;top:1581.90px;font-size:28px;line-height:34px;color:#242529;">demos</span><div class="av" style="left:265.6px;top:1583px;width:32px;height:32px;;background:radial-gradient(ellipse 20% 11% at 50% 24%,#b7b0a3 0,#b7b0a3 45%,transparent 100%),radial-gradient(ellipse 18% 23% at 50% 52%,#e3b597 0,#e3b597 45%,transparent 100%),radial-gradient(ellipse 42% 24% at 50% 100%,#c7c0a8 0,#c7c0a8 45%,transparent 100%),radial-gradient(ellipse 20% 40% at 85% 40%,#7f8a5c 0,#7f8a5c 45%,transparent 100%),radial-gradient(ellipse 24% 34% at 15% 30%,#a6ad88 0,#a6ad88 45%,transparent 100%),#8c9470"></div><div class="av" style="left:290.20000000000005px;top:1583px;width:32px;height:32px;;background:radial-gradient(ellipse 22% 12% at 50% 24%,#1c1512 0,#1c1512 45%,transparent 100%),radial-gradient(ellipse 18% 22% at 50% 52%,#a8653f 0,#a8653f 45%,transparent 100%),radial-gradient(ellipse 46% 30% at 50% 100%,#e23a3a 0,#e23a3a 45%,transparent 100%),radial-gradient(ellipse 14% 40% at 88% 40%,#d8c440 0,#d8c440 45%,transparent 100%),radial-gradient(ellipse 16% 40% at 12% 40%,#8f7f1e 0,#8f7f1e 45%,transparent 100%),#b8a227"></div><div class="av" style="left:314.8px;top:1583px;width:32px;height:32px;;background:radial-gradient(ellipse 21% 23% at 52% 42%,#e2b08e 0,#e2b08e 45%,transparent 100%),radial-gradient(ellipse 16% 26% at 78% 62%,#5a2e20 0,#5a2e20 45%,transparent 100%),radial-gradient(ellipse 16% 26% at 22% 62%,#5a2e20 0,#5a2e20 45%,transparent 100%),radial-gradient(ellipse 45% 26% at 50% 92%,#3b1e1a 0,#3b1e1a 45%,transparent 100%),radial-gradient(ellipse 30% 16% at 50% 10%,#9c8a74 0,#9c8a74 45%,transparent 100%),radial-gradient(ellipse 20% 30% at 90% 40%,#e9e2d4 0,#e9e2d4 45%,transparent 100%),radial-gradient(ellipse 22% 30% at 12% 40%,#c9792f 0,#c9792f 45%,transparent 100%),#8b5a3c"></div><span class="t" style="left:355px;top:1581.90px;font-size:28px;line-height:34px;color:#242529;">+24</span><svg style="left:91px;top:1631px" width="32" height="32" viewBox="0 0 16 16" fill="none" stroke="#58585a" stroke-width="1.2" stroke-linecap="round" stroke-linejoin="round" ><path d="M4.1 3.6 A8.3 8.3 0 0 1 12.4 11.9"/><path d="M4.1 6.5 A5.4 5.4 0 0 1 9.5 11.9"/><path d="M4.1 9.5 A2.4 2.4 0 0 1 6.5 11.9"/></svg><span class="t" style="left:132.7px;top:1629.90px;font-size:28px;line-height:34px;color:#242529;">rooms</span><div class="abs" style="left:16px;top:1672px;width:448px;height:2px;background:#dbdbdc"></div><span class="t" style="left:16px;top:1691.60px;font-size:28px;line-height:34px;color:#8d8d8f;letter-spacing:0.3px">Filter...</span></div>
<div id="ed">
<div class="abs" style="left:480px;top:134px;width:1256px;height:1678px;background:#fafafa"></div><div class="abs" style="left:480px;top:70px;width:1256px;height:64px;background:#ebebec;border-bottom:2px solid #c9c9ca"></div><div class="abs" style="left:600px;top:70px;width:2px;height:64px;background:#c9c9ca"></div><div class="abs" style="left:602px;top:70px;width:208px;height:64px;background:#fafafa"></div><div class="abs" style="left:810px;top:70px;width:2px;height:64px;background:#c9c9ca"></div><svg style="left:642.4px;top:85px" width="32" height="32" viewBox="0 0 16 16" fill="none" stroke="#58585a" stroke-width="1.2" stroke-linecap="round" stroke-linejoin="round" ><path d="M5 6 H12.6 M3.6 9.8 H11.1 M7.7 3.8 L5.4 12.2 M11.9 3.8 L9.6 12.2"/></svg><span class="t" style="left:680.6px;top:84.00px;font-size:28px;line-height:34px;color:#58585a;">demos</span><svg style="left:500px;top:86px" width="28" height="28" viewBox="0 0 16 16" fill="none" stroke="#242529" stroke-width="1.2" stroke-linecap="round" stroke-linejoin="round" ><path d="M8 12.45 L3.55 8 L8 3.55 M12.45 8 H3.55"/></svg><svg style="left:552px;top:86px" width="28" height="28" viewBox="0 0 16 16" fill="none" stroke="#8a8a8c" stroke-width="1.2" stroke-linecap="round" stroke-linejoin="round" ><path d="M8 12.45 L12.45 8 L8 3.55 M3.55 8 H12.45"/></svg><div class="abs" style="left:1736px;top:70px;width:2px;height:1742px;background:#c9c9ca"></div><div class="abs" style="left:480px;top:134px;width:1256px;height:46px;background:#eeeeef"></div><div class="abs" style="left:651px;top:594px;width:16.8px;height:46px;background:#a88a1d"></div><div class="abs" style="left:651px;top:686px;width:16.8px;height:46px;background:#63a25c"></div><div class="abs" style="left:1220.8px;top:502px;width:4px;height:46px;background:#b8742a"></div><div class="abs" style="left:651px;top:134px;width:17px;height:46px;border:2px solid #3a7fb8"></div><div class="abs" style="left:652px;top:136px;width:3px;height:42px;background:#9a4fb0"></div><div class="abs" style="left:480px;top:134px;width:1256px;height:1678px;overflow:hidden"><span class="t" style="left:0px;top:2.55px;font-size:28px;line-height:46px;color:#4a4a4e;width:107px;text-align:right;font-family:'Liberation Mono','DejaVu Sans Mono',monospace">1</span><span class="t code" style="left:171px;top:2.55px;font-size:28px;line-height:46px;color:#242529;white-space:pre;font-family:'Liberation Mono','DejaVu Sans Mono',monospace"><span class="r">## Friday, November 7, 2025</span></span>
<span class="t" style="left:0px;top:48.55px;font-size:28px;line-height:46px;color:#b5b5b8;width:107px;text-align:right;font-family:'Liberation Mono','DejaVu Sans Mono',monospace">2</span>
<span class="t" style="left:0px;top:94.55px;font-size:28px;line-height:46px;color:#b5b5b8;width:107px;text-align:right;font-family:'Liberation Mono','DejaVu Sans Mono',monospace">3</span><span class="t code" style="left:171px;top:94.55px;font-size:28px;line-height:46px;color:#242529;white-space:pre;font-family:'Liberation Mono','DejaVu Sans Mono',monospace"><span class="r">-</span> [ ] <span class="l">[@lukas]</span> Live updating diagnostics view</span>
<span class="t" style="left:0px;top:140.55px;font-size:28px;line-height:46px;color:#b5b5b8;width:107px;text-align:right;font-family:'Liberation Mono','DejaVu Sans Mono',monospace">4</span><span class="t code" style="left:171px;top:140.55px;font-size:28px;line-height:46px;color:#242529;white-space:pre;font-family:'Liberation Mono','DejaVu Sans Mono',monospace"><span class="r">-</span> [ ] <span class="l">[@jakub]</span> Staging large files with git</span>
<span class="t" style="left:0px;top:186.55px;font-size:28px;line-height:46px;color:#b5b5b8;width:107px;text-align:right;font-family:'Liberation Mono','DejaVu Sans Mono',monospace">5</span><span class="t code" style="left:171px;top:186.55px;font-size:28px;line-height:46px;color:#242529;white-space:pre;font-family:'Liberation Mono','DejaVu Sans Mono',monospace"><span class="r">-</span> [ ] <span class="l">[@richard]</span> Third-party Agent extensions with</span>
<span class="t code" style="left:171px;top:232.55px;font-size:28px;line-height:46px;color:#242529;white-space:pre;font-family:'Liberation Mono','DejaVu Sans Mono',monospace">terminal-based auth in production</span>
<span class="t" style="left:0px;top:278.55px;font-size:28px;line-height:46px;color:#b5b5b8;width:107px;text-align:right;font-family:'Liberation Mono','DejaVu Sans Mono',monospace">6</span><span class="t code" style="left:171px;top:278.55px;font-size:28px;line-height:46px;color:#242529;white-space:pre;font-family:'Liberation Mono','DejaVu Sans Mono',monospace"><span class="r">-</span> [ ] <span class="l">[@john]</span> Windows text input</span>
<span class="t" style="left:0px;top:324.55px;font-size:28px;line-height:46px;color:#b5b5b8;width:107px;text-align:right;font-family:'Liberation Mono','DejaVu Sans Mono',monospace">7</span><span class="t code" style="left:171px;top:324.55px;font-size:28px;line-height:46px;color:#242529;white-space:pre;font-family:'Liberation Mono','DejaVu Sans Mono',monospace"><span class="r">-</span> [ ] <span class="l">[@danilo]</span> zed.dev/acp</span>
<span class="t" style="left:0px;top:370.55px;font-size:28px;line-height:46px;color:#b5b5b8;width:107px;text-align:right;font-family:'Liberation Mono','DejaVu Sans Mono',monospace">8</span><span class="t code" style="left:171px;top:370.55px;font-size:28px;line-height:46px;color:#242529;white-space:pre;font-family:'Liberation Mono','DejaVu Sans Mono',monospace"><span class="r">-</span> [ ] <span class="l">[@andrew]</span> Relative paths in LSP &amp; DAP binaries</span>
<span class="t" style="left:0px;top:416.55px;font-size:28px;line-height:46px;color:#b5b5b8;width:107px;text-align:right;font-family:'Liberation Mono','DejaVu Sans Mono',monospace">9</span><span class="t code" style="left:171px;top:416.55px;font-size:28px;line-height:46px;color:#242529;white-space:pre;font-family:'Liberation Mono','DejaVu Sans Mono',monospace"><span class="r">-</span> [ ] <span class="l">[@]</span></span>
<span class="t" style="left:0px;top:462.55px;font-size:28px;line-height:46px;color:#b5b5b8;width:107px;text-align:right;font-family:'Liberation Mono','DejaVu Sans Mono',monospace">10</span>
<span class="t" style="left:0px;top:508.55px;font-size:28px;line-height:46px;color:#b5b5b8;width:107px;text-align:right;font-family:'Liberation Mono','DejaVu Sans Mono',monospace">11</span><span class="t code" style="left:171px;top:508.55px;font-size:28px;line-height:46px;color:#242529;white-space:pre;font-family:'Liberation Mono','DejaVu Sans Mono',monospace"><span class="dash">——</span> #RealTimeReactions<span class="tm">™</span>!!!</span>
<span class="t" style="left:0px;top:554.55px;font-size:28px;line-height:46px;color:#b5b5b8;width:107px;text-align:right;font-family:'Liberation Mono','DejaVu Sans Mono',monospace">12</span>
<span class="t" style="left:0px;top:600.55px;font-size:28px;line-height:46px;color:#b5b5b8;width:107px;text-align:right;font-family:'Liberation Mono','DejaVu Sans Mono',monospace">13</span><span class="t code" style="left:171px;top:600.55px;font-size:28px;line-height:46px;color:#242529;white-space:pre;font-family:'Liberation Mono','DejaVu Sans Mono',monospace"><span class="r">## Friday, October 24, 2025</span></span>
<span class="t" style="left:0px;top:646.55px;font-size:28px;line-height:46px;color:#b5b5b8;width:107px;text-align:right;font-family:'Liberation Mono','DejaVu Sans Mono',monospace">14</span>
<span class="t" style="left:0px;top:692.55px;font-size:28px;line-height:46px;color:#b5b5b8;width:107px;text-align:right;font-family:'Liberation Mono','DejaVu Sans Mono',monospace">15</span><span class="t code" style="left:171px;top:692.55px;font-size:28px;line-height:46px;color:#242529;white-space:pre;font-family:'Liberation Mono','DejaVu Sans Mono',monospace"><span class="r">-</span> [x] <span class="l">[@julia]</span> open \\wsl paths</span>
<span class="t" style="left:0px;top:738.55px;font-size:28px;line-height:46px;color:#b5b5b8;width:107px;text-align:right;font-family:'Liberation Mono','DejaVu Sans Mono',monospace">16</span><span class="t code" style="left:171px;top:738.55px;font-size:28px;line-height:46px;color:#242529;white-space:pre;font-family:'Liberation Mono','DejaVu Sans Mono',monospace"><span class="r">-</span> [x] <span class="l">[@kate]</span> mini profiler demo!</span>
<span class="t" style="left:0px;top:784.55px;font-size:28px;line-height:46px;color:#b5b5b8;width:107px;text-align:right;font-family:'Liberation Mono','DejaVu Sans Mono',monospace">17</span><span class="t code" style="left:171px;top:784.55px;font-size:28px;line-height:46px;color:#242529;white-space:pre;font-family:'Liberation Mono','DejaVu Sans Mono',monospace"><span class="r">-</span> [x] <span class="l">[@richard]</span> Agents via Extensions</span>
<span class="t" style="left:0px;top:830.55px;font-size:28px;line-height:46px;color:#b5b5b8;width:107px;text-align:right;font-family:'Liberation Mono','DejaVu Sans Mono',monospace">18</span><span class="t code" style="left:171px;top:830.55px;font-size:28px;line-height:46px;color:#242529;white-space:pre;font-family:'Liberation Mono','DejaVu Sans Mono',monospace"><span class="r">-</span> [x] <span class="l">[@julia]</span> winget</span>
<span class="t" style="left:0px;top:876.55px;font-size:28px;line-height:46px;color:#b5b5b8;width:107px;text-align:right;font-family:'Liberation Mono','DejaVu Sans Mono',monospace">19</span><span class="t code" style="left:171px;top:876.55px;font-size:28px;line-height:46px;color:#242529;white-space:pre;font-family:'Liberation Mono','DejaVu Sans Mono',monospace"><span class="r">-</span> [x] <span class="l">[@jakub]</span> virtualenv/venv now works in WSL</span>
<span class="t" style="left:0px;top:922.55px;font-size:28px;line-height:46px;color:#b5b5b8;width:107px;text-align:right;font-family:'Liberation Mono','DejaVu Sans Mono',monospace">20</span><span class="t code" style="left:171px;top:922.55px;font-size:28px;line-height:46px;color:#242529;white-space:pre;font-family:'Liberation Mono','DejaVu Sans Mono',monospace"><span class="r">-</span> [x] <span class="l">[@kirill]</span> Inlay hints</span>
<span class="t" style="left:0px;top:968.55px;font-size:28px;line-height:46px;color:#b5b5b8;width:107px;text-align:right;font-family:'Liberation Mono','DejaVu Sans Mono',monospace">21</span><span class="t code" style="left:171px;top:968.55px;font-size:28px;line-height:46px;color:#242529;white-space:pre;font-family:'Liberation Mono','DejaVu Sans Mono',monospace"><span class="r">-</span> [x] <span class="l">[@julia]</span> crash handler restarting</span>
<span class="t" style="left:0px;top:1014.55px;font-size:28px;line-height:46px;color:#b5b5b8;width:107px;text-align:right;font-family:'Liberation Mono','DejaVu Sans Mono',monospace">22</span><span class="t code" style="left:171px;top:1014.55px;font-size:28px;line-height:46px;color:#242529;white-space:pre;font-family:'Liberation Mono','DejaVu Sans Mono',monospace"><span class="r">-</span> [x] <span class="l">[@david @joseph @julia]</span> command palette keybind button</span>
<span class="t" style="left:0px;top:1060.55px;font-size:28px;line-height:46px;color:#b5b5b8;width:107px;text-align:right;font-family:'Liberation Mono','DejaVu Sans Mono',monospace">23</span><span class="t code" style="left:171px;top:1060.55px;font-size:28px;line-height:46px;color:#242529;white-space:pre;font-family:'Liberation Mono','DejaVu Sans Mono',monospace"><span class="r">-</span> [x] <span class="l">[@mikayla]</span> Focus-visible</span>
<span class="t" style="left:0px;top:1106.55px;font-size:28px;line-height:46px;color:#b5b5b8;width:107px;text-align:right;font-family:'Liberation Mono','DejaVu Sans Mono',monospace">24</span><span class="t code" style="left:171px;top:1106.55px;font-size:28px;line-height:46px;color:#242529;white-space:pre;font-family:'Liberation Mono','DejaVu Sans Mono',monospace"><span class="r">-</span> [x] <span class="l">[@danilo]</span> Tiny little agent improvements</span>
<span class="t" style="left:0px;top:1152.55px;font-size:28px;line-height:46px;color:#b5b5b8;width:107px;text-align:right;font-family:'Liberation Mono','DejaVu Sans Mono',monospace">25</span><span class="t code" style="left:171px;top:1152.55px;font-size:28px;line-height:46px;color:#242529;white-space:pre;font-family:'Liberation Mono','DejaVu Sans Mono',monospace"><span class="r">-</span> [x] <span class="l">[@julia @david]</span> end_of_input context</span>
<span class="t" style="left:0px;top:1198.55px;font-size:28px;line-height:46px;color:#b5b5b8;width:107px;text-align:right;font-family:'Liberation Mono','DejaVu Sans Mono',monospace">26</span>
<span class="t" style="left:0px;top:1244.55px;font-size:28px;line-height:46px;color:#b5b5b8;width:107px;text-align:right;font-family:'Liberation Mono','DejaVu Sans Mono',monospace">27</span><span class="t code" style="left:171px;top:1244.55px;font-size:28px;line-height:46px;color:#242529;white-space:pre;font-family:'Liberation Mono','DejaVu Sans Mono',monospace"><span class="dash">——</span> #RealTimeReactions<span class="tm">™</span>!!!</span>
<span class="t" style="left:0px;top:1290.55px;font-size:28px;line-height:46px;color:#b5b5b8;width:107px;text-align:right;font-family:'Liberation Mono','DejaVu Sans Mono',monospace">28</span>
<span class="t" style="left:0px;top:1336.55px;font-size:28px;line-height:46px;color:#b5b5b8;width:107px;text-align:right;font-family:'Liberation Mono','DejaVu Sans Mono',monospace">29</span><span class="t code" style="left:171px;top:1336.55px;font-size:28px;line-height:46px;color:#242529;white-space:pre;font-family:'Liberation Mono','DejaVu Sans Mono',monospace">Demos.. Demos! <span class="em"><svg class="emsvg" width="37.8" height="46" viewBox="0 0 37.8 46"><g fill="#f6b92c" stroke="#dc9c1c" stroke-width="0.8"><path d="M11.2 15 C9.5 22 13.6 27 14.8 32 C15.8 38 17.6 40.4 20.8 40.4 C24.8 40.4 26 35.5 26.4 30 C26.9 24 29.8 20.5 28.6 14.8 C27 9.6 12.8 8.8 11.2 15 Z"/><circle cx="13.2" cy="9" r="3.3"/><circle cx="18.4" cy="7.6" r="2.3"/><circle cx="22.3" cy="8.6" r="2.1"/><circle cx="25.5" cy="10.6" r="1.9"/><circle cx="27.8" cy="13.2" r="1.6"/></g><ellipse cx="19.5" cy="18" rx="6.5" ry="5" fill="#fbc83c" opacity=".7"/></svg><span class="emc">🦶</span></span><span class="em"><svg class="emsvg" width="37.8" height="46" viewBox="0 0 37.8 46"><g fill="#f6b92c" stroke="#dc9c1c" stroke-width="0.8"><path d="M11.2 15 C9.5 22 13.6 27 14.8 32 C15.8 38 17.6 40.4 20.8 40.4 C24.8 40.4 26 35.5 26.4 30 C26.9 24 29.8 20.5 28.6 14.8 C27 9.6 12.8 8.8 11.2 15 Z"/><circle cx="13.2" cy="9" r="3.3"/><circle cx="18.4" cy="7.6" r="2.3"/><circle cx="22.3" cy="8.6" r="2.1"/><circle cx="25.5" cy="10.6" r="1.9"/><circle cx="27.8" cy="13.2" r="1.6"/></g><ellipse cx="19.5" cy="18" rx="6.5" ry="5" fill="#fbc83c" opacity=".7"/></svg><span class="emc">🦶</span></span><span class="em"><svg class="emsvg" width="37.8" height="46" viewBox="0 0 37.8 46"><g fill="#4a4a4c"><path d="M1 13.2 L4.5 11 L5 13.6 Z M3.6 8.4 L7.2 6 L7.6 10.6 Z M10.2 6.8 L12.4 7.2 L10.8 10 Z M24.2 9.4 L26.4 9.4 L25.6 12.6 Z M29.2 13 L32.8 9 L31.4 13.8 Z M30 16.6 L33.6 14.6 L32.6 17.6 Z"/></g><g transform="rotate(-38 18 26)"><rect x="9.5" y="12" width="15" height="27" rx="6.5" fill="#e9a81e"/><path d="M12.8 13 V27 M16.2 12.4 V27 M19.6 13 V27" stroke="#c98612" stroke-width="1.1"/></g><g transform="rotate(-38 24 30)"><rect x="17.5" y="17" width="13.5" height="24" rx="6.5" fill="#f8c335"/></g></svg><span class="emc">👏</span></span></span>
<span class="t" style="left:0px;top:1382.55px;font-size:28px;line-height:46px;color:#b5b5b8;width:107px;text-align:right;font-family:'Liberation Mono','DejaVu Sans Mono',monospace">30</span><span class="t code" style="left:171px;top:1382.55px;font-size:28px;line-height:46px;color:#242529;white-space:pre;font-family:'Liberation Mono','DejaVu Sans Mono',monospace">Joseph: Oh, I forgot about the keybind button!</span>
<span class="t" style="left:0px;top:1428.55px;font-size:28px;line-height:46px;color:#b5b5b8;width:107px;text-align:right;font-family:'Liberation Mono','DejaVu Sans Mono',monospace">31</span><span class="t code" style="left:171px;top:1428.55px;font-size:28px;line-height:46px;color:#242529;white-space:pre;font-family:'Liberation Mono','DejaVu Sans Mono',monospace">Our collab connection might be weak, but our friendship</span>
<span class="t code" style="left:171px;top:1474.55px;font-size:28px;line-height:46px;color:#242529;white-space:pre;font-family:'Liberation Mono','DejaVu Sans Mono',monospace">connection is strong</span>
<span class="t" style="left:0px;top:1520.55px;font-size:28px;line-height:46px;color:#b5b5b8;width:107px;text-align:right;font-family:'Liberation Mono','DejaVu Sans Mono',monospace">32</span><span class="t code" style="left:171px;top:1520.55px;font-size:28px;line-height:46px;color:#242529;white-space:pre;font-family:'Liberation Mono','DejaVu Sans Mono',monospace">Woah! Neat!</span>
<span class="t" style="left:0px;top:1566.55px;font-size:28px;line-height:46px;color:#b5b5b8;width:107px;text-align:right;font-family:'Liberation Mono','DejaVu Sans Mono',monospace">33</span><span class="t code" style="left:171px;top:1566.55px;font-size:28px;line-height:46px;color:#242529;white-space:pre;font-family:'Liberation Mono','DejaVu Sans Mono',monospace"><span class="em"><svg class="emsvg" width="37.8" height="46" viewBox="0 0 37.8 46"><defs><radialGradient id="fg" cx="18.9" cy="37" r="30" gradientUnits="userSpaceOnUse"><stop offset="0" stop-color="#fffde6"/><stop offset=".13" stop-color="#ffe94a"/><stop offset=".42" stop-color="#fba238"/><stop offset=".62" stop-color="#f2642a"/><stop offset="1" stop-color="#e2381c"/></radialGradient></defs><path fill="url(#fg)" d="M18.5 5.5 C22 10 26.8 13 26.4 21.6 C27.8 23.4 29.6 22.6 30.8 20.2 C33.4 26 32.4 33 26.4 37.6 C23 39.9 15 39.9 11.8 37.6 C5.8 33 4.4 27 7.4 20.6 C8 23 10 24.6 12.5 24 C12.5 18 14 15.5 16.4 13.4 C18 11 18.3 8.5 18.5 5.5 Z"/><path d="M7.2 17.4 L9.4 13.8" stroke="#e2522a" stroke-width="1.1"/></svg><span class="emc">🔥</span></span><span class="em"><svg class="emsvg" width="37.8" height="46" viewBox="0 0 37.8 46"><defs><radialGradient id="fg" cx="18.9" cy="37" r="30" gradientUnits="userSpaceOnUse"><stop offset="0" stop-color="#fffde6"/><stop offset=".13" stop-color="#ffe94a"/><stop offset=".42" stop-color="#fba238"/><stop offset=".62" stop-color="#f2642a"/><stop offset="1" stop-color="#e2381c"/></radialGradient></defs><path fill="url(#fg)" d="M18.5 5.5 C22 10 26.8 13 26.4 21.6 C27.8 23.4 29.6 22.6 30.8 20.2 C33.4 26 32.4 33 26.4 37.6 C23 39.9 15 39.9 11.8 37.6 C5.8 33 4.4 27 7.4 20.6 C8 23 10 24.6 12.5 24 C12.5 18 14 15.5 16.4 13.4 C18 11 18.3 8.5 18.5 5.5 Z"/><path d="M7.2 17.4 L9.4 13.8" stroke="#e2522a" stroke-width="1.1"/></svg><span class="emc">🔥</span></span></span>
<span class="t" style="left:0px;top:1612.55px;font-size:28px;line-height:46px;color:#b5b5b8;width:107px;text-align:right;font-family:'Liberation Mono','DejaVu Sans Mono',monospace">34</span><span class="t code" style="left:171px;top:1612.55px;font-size:28px;line-height:46px;color:#242529;white-space:pre;font-family:'Liberation Mono','DejaVu Sans Mono',monospace">that's rly cool</span>
<span class="t" style="left:0px;top:1658.55px;font-size:28px;line-height:46px;color:#b5b5b8;width:107px;text-align:right;font-family:'Liberation Mono','DejaVu Sans Mono',monospace">35</span><span class="t code" style="left:171px;top:1658.55px;font-size:28px;line-height:46px;color:#242529;white-space:pre;font-family:'Liberation Mono','DejaVu Sans Mono',monospace">mini profiler is fire! (+7)</span>
</div></div>
<div id="rp">
<div class="abs" style="left:1738px;top:134px;width:1254px;height:1678px;background:#fafafa"></div><div class="abs" style="left:1738px;top:70px;width:1254px;height:64px;background:#ebebec;border-bottom:2px solid #c9c9ca"></div><div class="abs" style="left:1856px;top:70px;width:2px;height:64px;background:#c9c9ca"></div><div class="abs" style="left:1858px;top:70px;width:320px;height:64px;background:#fafafa"></div><div class="abs" style="left:2178px;top:70px;width:2px;height:64px;background:#c9c9ca"></div><svg style="left:1900px;top:87.5px" width="28" height="28" viewBox="0 0 16 16" fill="none" stroke="#58585a" stroke-width="1.2" stroke-linecap="round" stroke-linejoin="round" ><rect x="2" y="2.5" width="12" height="8.1" rx="1.6" fill="currentColor" fill-opacity="0.08"/><path d="M8 10.6 V13.4 M4.9 13.4 H11.1"/></svg><span class="t" style="left:1936px;top:84.00px;font-size:28px;line-height:34px;color:#242529;letter-spacing:0.08px">Veykril's screen</span><svg style="left:1757px;top:86px" width="28" height="28" viewBox="0 0 16 16" fill="none" stroke="#8a8a8c" stroke-width="1.2" stroke-linecap="round" stroke-linejoin="round" ><path d="M8 12.45 L3.55 8 L8 3.55 M12.45 8 H3.55"/></svg><svg style="left:1808.5px;top:86px" width="28" height="28" viewBox="0 0 16 16" fill="none" stroke="#8a8a8c" stroke-width="1.2" stroke-linecap="round" stroke-linejoin="round" ><path d="M8 12.45 L12.45 8 L8 3.55 M3.55 8 H12.45"/></svg><div class="abs" style="left:2818px;top:70px;width:2px;height:62px;background:#c9c9ca"></div><svg style="left:2839.7px;top:86.5px" width="28.6" height="28.6" viewBox="0 0 16 16" fill="none" stroke="#242529" stroke-width="1.2" stroke-linecap="round" stroke-linejoin="round" ><path d="M8 3 V13 M3 8 H13"/></svg><svg style="left:2891.3px;top:86.1px" width="29.4" height="29.4" viewBox="0 0 16 16" fill="none" stroke="#242529" stroke-width="1.2" stroke-linecap="round" stroke-linejoin="round" ><rect x="2.4" y="2.6" width="11.2" height="10.8" rx="1.2"/><path d="M8 2.6 V13.4"/><rect x="8" y="2.6" width="5.6" height="10.8" fill="currentColor" fill-opacity="0.22" stroke="none"/></svg><svg style="left:2943.5px;top:86.3px" width="29" height="29" viewBox="0 0 16 16" fill="none" stroke="#242529" stroke-width="1.2" stroke-linecap="round" stroke-linejoin="round" ><path d="M9.6 3.2 H12.8 V6.4 M12.8 3.2 L9.2 6.8 M6.4 12.8 H3.2 V9.6 M3.2 12.8 L6.8 9.2"/></svg><div id="share" class="abs" style="left:1738px;top:710px;width:1254px;height:526px;background:#2b2f37;overflow:hidden"><div class="abs" style="left:0px;top:0px;width:626px;height:13.2px;background:#3d4350;"></div><div class="abs" style="left:2px;top:6px;width:3.4px;height:1px;background:#c5cad3;"></div><span class="t" style="left:9px;top:3.02px;font-size:5.2px;line-height:6.76px;color:#c5cad3;">salsa</span><span class="t" style="left:23px;top:3.02px;font-size:5.2px;line-height:6.76px;color:#8f97a3;">collab-rs</span><span class="t" style="left:603px;top:2.50px;font-size:6px;line-height:7.80px;color:#aab0bb;">&#9633;</span><span class="t" style="left:616px;top:2.17px;font-size:6.5px;line-height:8.45px;color:#aab0bb;">&#10005;</span><div class="abs" style="left:0px;top:13.2px;width:85.5px;height:483.5px;background:#333842;"></div><span class="t" style="left:9px;top:14.16px;font-size:5.3px;line-height:6.89px;color:#aab0bb;">salsa</span><div class="abs" style="left:1.5px;top:15.4px;width:4.6px;height:4.4px;background:#8b93a0;border-radius:1px"></div><div class="abs" style="left:9.5px;top:24.8px;width:5px;height:4.6px;background:#9aa1ad;border-radius:1px;opacity:.8"></div><span class="t" style="left:17.5px;top:23.95px;font-size:5.3px;line-height:6.89px;color:#b4bac4;">src</span><div class="abs" style="left:16.5px;top:33.8px;width:4.6px;height:4.6px;border:0.8px solid #9aa1ad;border-radius:1px"></div><span class="t" style="left:24.5px;top:32.95px;font-size:5.3px;line-height:6.89px;color:#b4bac4;">interned</span><div class="abs" style="left:16.5px;top:43.3px;width:4.6px;height:4.6px;border:0.8px solid #9aa1ad;border-radius:1px"></div><span class="t" style="left:24.5px;top:42.45px;font-size:5.3px;line-height:6.89px;color:#b4bac4;">table</span><div class="abs" style="left:16.5px;top:52.8px;width:4.6px;height:4.6px;border:0.8px solid #9aa1ad;border-radius:1px"></div><span class="t" style="left:24.5px;top:51.95px;font-size:5.3px;line-height:6.89px;color:#b4bac4;">tracked_struct</span><div class="abs" style="left:16.9px;top:62.5px;width:4.4px;height:4.4px;border-radius:50%;border:1px solid #9aa1ad"></div><span class="t" style="left:24.5px;top:61.46px;font-size:5.3px;line-height:6.89px;color:#b4bac4;">accumulator.rs</span><div class="abs" style="left:16.9px;top:72px;width:4.4px;height:4.4px;border-radius:50%;border:1px solid #9aa1ad"></div><span class="t" style="left:24.5px;top:70.96px;font-size:5.3px;line-height:6.89px;color:#b4bac4;">active_query.rs</span><div class="abs" style="left:16.9px;top:81.5px;width:4.4px;height:4.4px;border-radius:50%;border:1px solid #9aa1ad"></div><span class="t" style="left:24.5px;top:80.46px;font-size:5.3px;line-height:6.89px;color:#b4bac4;">attach.rs</span><div class="abs" style="left:16.9px;top:91px;width:4.4px;height:4.4px;border-radius:50%;border:1px solid #9aa1ad"></div><span class="t" style="left:24.5px;top:89.96px;font-size:5.3px;line-height:6.89px;color:#b4bac4;">cancelled.rs</span><div class="abs" style="left:16.9px;top:100.5px;width:4.4px;height:4.4px;border-radius:50%;border:1px solid #9aa1ad"></div><span class="t" style="left:24.5px;top:99.46px;font-size:5.3px;line-height:6.89px;color:#7f8792;">cycle.rs</span><div class="abs" style="left:16.9px;top:110px;width:4.4px;height:4.4px;border-radius:50%;border:1px solid #9aa1ad"></div><span class="t" style="left:24.5px;top:108.96px;font-size:5.3px;line-height:6.89px;color:#b4bac4;">database.rs</span><div class="abs" style="left:16.9px;top:119.5px;width:4.4px;height:4.4px;border-radius:50%;border:1px solid #9aa1ad"></div><span class="t" style="left:24.5px;top:118.46px;font-size:5.3px;line-height:6.89px;color:#b4bac4;">database_impl.rs</span><div class="abs" style="left:16.9px;top:129px;width:4.4px;height:4.4px;border-radius:50%;border:1px solid #9aa1ad"></div><span class="t" style="left:24.5px;top:127.96px;font-size:5.3px;line-height:6.89px;color:#b4bac4;">durability.rs</span><div class="abs" style="left:16.9px;top:138.5px;width:4.4px;height:4.4px;border-radius:50%;border:1px solid #9aa1ad"></div><span class="t" style="left:24.5px;top:137.46px;font-size:5.3px;line-height:6.89px;color:#b4bac4;">event.rs</span><div class="abs" style="left:16.9px;top:148px;width:4.4px;height:4.4px;border-radius:50%;border:1px solid #9aa1ad"></div><span class="t" style="left:24.5px;top:146.96px;font-size:5.3px;line-height:6.89px;color:#b4bac4;">function.rs</span><div class="abs" style="left:16.9px;top:157.5px;width:4.4px;height:4.4px;border-radius:50%;border:1px solid #9aa1ad"></div><span class="t" style="left:24.5px;top:156.46px;font-size:5.3px;line-height:6.89px;color:#b4bac4;">hash.rs</span><div class="abs" style="left:16.9px;top:167px;width:4.4px;height:4.4px;border-radius:50%;border:1px solid #9aa1ad"></div><span class="t" style="left:24.5px;top:165.96px;font-size:5.3px;line-height:6.89px;color:#b4bac4;">id.rs</span><div class="abs" style="left:16.9px;top:176.5px;width:4.4px;height:4.4px;border-radius:50%;border:1px solid #9aa1ad"></div><span class="t" style="left:24.5px;top:175.46px;font-size:5.3px;line-height:6.89px;color:#b4bac4;">ingredient.rs</span><div class="abs" style="left:16.9px;top:186px;width:4.4px;height:4.4px;border-radius:50%;border:1px solid #9aa1ad"></div><span class="t" style="left:24.5px;top:184.96px;font-size:5.3px;line-height:6.89px;color:#b4bac4;">ingredient_cache.rs</span><div class="abs" style="left:16.9px;top:195.5px;width:4.4px;height:4.4px;border-radius:50%;border:1px solid #9aa1ad"></div><span class="t" style="left:24.5px;top:194.46px;font-size:5.3px;line-height:6.89px;color:#b4bac4;">input.rs</span><div class="abs" style="left:16.9px;top:205px;width:4.4px;height:4.4px;border-radius:50%;border:1px solid #9aa1ad"></div><span class="t" style="left:24.5px;top:203.96px;font-size:5.3px;line-height:6.89px;color:#b4bac4;">interned.rs</span><div class="abs" style="left:16.9px;top:214.5px;width:4.4px;height:4.4px;border-radius:50%;border:1px solid #9aa1ad"></div><span class="t" style="left:24.5px;top:213.46px;font-size:5.3px;line-height:6.89px;color:#b4bac4;">key.rs</span><div class="abs" style="left:0px;top:221.7px;width:85.5px;height:9.4px;background:#3d4350;"></div><div class="abs" style="left:16.9px;top:224px;width:4.4px;height:4.4px;border-radius:50%;border:1px solid #9aa1ad"></div><span class="t" style="left:24.5px;top:222.96px;font-size:5.3px;line-height:6.89px;color:#b4bac4;">lib.rs</span><div class="abs" style="left:16.9px;top:233.5px;width:4.4px;height:4.4px;border-radius:50%;border:1px solid #9aa1ad"></div><span class="t" style="left:24.5px;top:232.46px;font-size:5.3px;line-height:6.89px;color:#b4bac4;">memo_ingredient_indices.rs</span><div class="abs" style="left:16.9px;top:243px;width:4.4px;height:4.4px;border-radius:50%;border:1px solid #9aa1ad"></div><span class="t" style="left:24.5px;top:241.96px;font-size:5.3px;line-height:6.89px;color:#7f8792;">nonce.rs</span><div class="abs" style="left:16.9px;top:252.5px;width:4.4px;height:4.4px;border-radius:50%;border:1px solid #9aa1ad"></div><span class="t" style="left:24.5px;top:251.46px;font-size:5.3px;line-height:6.89px;color:#b4bac4;">parallel.rs</span><div class="abs" style="left:16.9px;top:262px;width:4.4px;height:4.4px;border-radius:50%;border:1px solid #9aa1ad"></div><span class="t" style="left:24.5px;top:260.95px;font-size:5.3px;line-height:6.89px;color:#b4bac4;">return_mode.rs</span><div class="abs" style="left:16.9px;top:271.5px;width:4.4px;height:4.4px;border-radius:50%;border:1px solid #9aa1ad"></div><span class="t" style="left:24.5px;top:270.45px;font-size:5.3px;line-height:6.89px;color:#b4bac4;">revision.rs</span><div class="abs" style="left:16.9px;top:281px;width:4.4px;height:4.4px;border-radius:50%;border:1px solid #9aa1ad"></div><span class="t" style="left:24.5px;top:279.95px;font-size:5.3px;line-height:6.89px;color:#b4bac4;">runtime.rs</span><div class="abs" style="left:16.9px;top:290.5px;width:4.4px;height:4.4px;border-radius:50%;border:1px solid #9aa1ad"></div><span class="t" style="left:24.5px;top:289.45px;font-size:5.3px;line-height:6.89px;color:#b4bac4;">salsa_struct.rs</span><div class="abs" style="left:16.9px;top:300px;width:4.4px;height:4.4px;border-radius:50%;border:1px solid #9aa1ad"></div><span class="t" style="left:24.5px;top:298.95px;font-size:5.3px;line-height:6.89px;color:#b4bac4;">storage.rs</span><div class="abs" style="left:16.9px;top:309.5px;width:4.4px;height:4.4px;border-radius:50%;border:1px solid #9aa1ad"></div><span class="t" style="left:24.5px;top:308.45px;font-size:5.3px;line-height:6.89px;color:#7f8792;">sync.rs</span><div class="abs" style="left:16.9px;top:319px;width:4.4px;height:4.4px;border-radius:50%;border:1px solid #9aa1ad"></div><span class="t" style="left:24.5px;top:317.95px;font-size:5.3px;line-height:6.89px;color:#b4bac4;">table.rs</span><div class="abs" style="left:16.9px;top:328.5px;width:4.4px;height:4.4px;border-radius:50%;border:1px solid #9aa1ad"></div><span class="t" style="left:24.5px;top:327.45px;font-size:5.3px;line-height:6.89px;color:#7f8792;">tracing.rs</span><div class="abs" style="left:16.9px;top:338px;width:4.4px;height:4.4px;border-radius:50%;border:1px solid #9aa1ad"></div><span class="t" style="left:24.5px;top:336.95px;font-size:5.3px;line-height:6.89px;color:#b4bac4;">tracked_struct.rs</span><div class="abs" style="left:16.9px;top:347.5px;width:4.4px;height:4.4px;border-radius:50%;border:1px solid #9aa1ad"></div><span class="t" style="left:24.5px;top:346.45px;font-size:5.3px;line-height:6.89px;color:#7f8792;">update.rs</span><div class="abs" style="left:16.9px;top:357px;width:4.4px;height:4.4px;border-radius:50%;border:1px solid #9aa1ad"></div><span class="t" style="left:24.5px;top:355.95px;font-size:5.3px;line-height:6.89px;color:#7f8792;">views.rs</span><div class="abs" style="left:16.9px;top:366.5px;width:4.4px;height:4.4px;border-radius:50%;border:1px solid #9aa1ad"></div><span class="t" style="left:24.5px;top:365.45px;font-size:5.3px;line-height:6.89px;color:#b4bac4;">zalsa.rs</span><div class="abs" style="left:16.9px;top:376px;width:4.4px;height:4.4px;border-radius:50%;border:1px solid #9aa1ad"></div><span class="t" style="left:24.5px;top:374.95px;font-size:5.3px;line-height:6.89px;color:#b4bac4;">zalsa_local.rs</span><div class="abs" style="left:9.5px;top:385.3px;width:4.6px;height:4.6px;border:0.8px solid #9aa1ad;border-radius:1px"></div><span class="t" style="left:17.5px;top:384.45px;font-size:5.3px;line-height:6.89px;color:#7f8792;">target</span><div class="abs" style="left:9.5px;top:394.8px;width:4.6px;height:4.6px;border:0.8px solid #9aa1ad;border-radius:1px"></div><span class="t" style="left:17.5px;top:393.95px;font-size:5.3px;line-height:6.89px;color:#b4bac4;">tests</span><div class="abs" style="left:9.9px;top:404.5px;width:4.4px;height:4.4px;border-radius:50%;border:1px solid #9aa1ad"></div><span class="t" style="left:17.5px;top:403.45px;font-size:5.3px;line-height:6.89px;color:#7f8792;">.dir-locals.el</span><div class="abs" style="left:9.9px;top:414px;width:4.4px;height:4.4px;border-radius:50%;border:1px solid #9aa1ad"></div><span class="t" style="left:17.5px;top:412.95px;font-size:5.3px;line-height:6.89px;color:#b4bac4;">.gitignore</span><div class="abs" style="left:9.9px;top:423.5px;width:4.4px;height:4.4px;border-radius:50%;border:1px solid #9aa1ad"></div><span class="t" style="left:17.5px;top:422.45px;font-size:5.3px;line-height:6.89px;color:#7f8792;">Cargo.lock</span><div class="abs" style="left:9.9px;top:433px;width:4.4px;height:4.4px;border-radius:50%;border:1px solid #9aa1ad"></div><span class="t" style="left:17.5px;top:431.95px;font-size:5.3px;line-height:6.89px;color:#b4bac4;">Cargo.toml</span><div class="abs" style="left:9.9px;top:442.5px;width:4.4px;height:4.4px;border-radius:50%;border:1px solid #9aa1ad"></div><span class="t" style="left:17.5px;top:441.45px;font-size:5.3px;line-height:6.89px;color:#b4bac4;">CHANGELOG.md</span><div class="abs" style="left:9.9px;top:452px;width:4.4px;height:4.4px;border-radius:50%;border:1px solid #9aa1ad"></div><span class="t" style="left:17.5px;top:450.95px;font-size:5.3px;line-height:6.89px;color:#b4bac4;">FAQ.md</span><div class="abs" style="left:9.9px;top:461.5px;width:4.4px;height:4.4px;border-radius:50%;border:1px solid #9aa1ad"></div><span class="t" style="left:17.5px;top:460.45px;font-size:5.3px;line-height:6.89px;color:#7f8792;">justfile</span><div class="abs" style="left:9.9px;top:471px;width:4.4px;height:4.4px;border-radius:50%;border:1px solid #9aa1ad"></div><span class="t" style="left:17.5px;top:469.95px;font-size:5.3px;line-height:6.89px;color:#b4bac4;">LICENSE-APACHE</span><div class="abs" style="left:9.9px;top:480.5px;width:4.4px;height:4.4px;border-radius:50%;border:1px solid #9aa1ad"></div><span class="t" style="left:17.5px;top:479.45px;font-size:5.3px;line-height:6.89px;color:#7f8792;">LICENSE-MIT</span><div class="abs" style="left:9.9px;top:490px;width:4.4px;height:4.4px;border-radius:50%;border:1px solid #9aa1ad"></div><span class="t" style="left:17.5px;top:488.95px;font-size:5.3px;line-height:6.89px;color:#7f8792;">README.md</span><div class="abs" style="left:85.5px;top:13.2px;width:540.5px;height:10px;background:#333842;"></div><div class="abs" style="left:112px;top:13.2px;width:32.5px;height:10px;background:#2b2f37;"></div><span class="t" style="left:92px;top:14.95px;font-size:5px;line-height:6.50px;color:#7f8794;">&#8592;  &#8594;</span><span class="t" style="left:117px;top:14.82px;font-size:5.2px;line-height:6.76px;color:#c5cad3;">&#9881; lib.rs</span><span class="t" style="left:599px;top:14.30px;font-size:6px;line-height:7.80px;color:#aab0bb;letter-spacing:1px">+ &#9707; &#10530;</span><span class="t" style="left:91.5px;top:27.89px;font-size:5.4px;line-height:7.02px;color:#8f97a3;font-family:'Liberation Mono','DejaVu Sans Mono',monospace;">src\lib.rs</span><span class="t" style="left:590px;top:28.15px;font-size:5px;line-height:6.50px;color:#8f97a3;">&#9632; &#10033; &#921; &#9776;</span><span class="t" style="left:100.6px;top:41.52px;font-size:7.2px;line-height:9.36px;color:#515a66;font-family:'Liberation Mono','DejaVu Sans Mono',monospace;width:14px;text-align:right">25</span><span class="t" style="left:130.6px;top:41.50px;font-size:7.23px;line-height:9.40px;color:#bcc1cb;font-family:'Liberation Mono','DejaVu Sans Mono',monospace;white-space:pre"><span style="color:#a7a6cc">mod</span> revision;</span><span class="t" style="left:100.6px;top:53.21px;font-size:7.2px;line-height:9.36px;color:#515a66;font-family:'Liberation Mono','DejaVu Sans Mono',monospace;width:14px;text-align:right">26</span><span class="t" style="left:130.6px;top:53.19px;font-size:7.23px;line-height:9.40px;color:#bcc1cb;font-family:'Liberation Mono','DejaVu Sans Mono',monospace;white-space:pre"><span style="color:#a7a6cc">mod</span> runtime;</span><span class="t" style="left:100.6px;top:64.90px;font-size:7.2px;line-height:9.36px;color:#515a66;font-family:'Liberation Mono','DejaVu Sans Mono',monospace;width:14px;text-align:right">27</span><span class="t" style="left:130.6px;top:64.88px;font-size:7.23px;line-height:9.40px;color:#bcc1cb;font-family:'Liberation Mono','DejaVu Sans Mono',monospace;white-space:pre"><span style="color:#a7a6cc">mod</span> salsa_struct;</span><span class="t" style="left:100.6px;top:76.59px;font-size:7.2px;line-height:9.36px;color:#515a66;font-family:'Liberation Mono','DejaVu Sans Mono',monospace;width:14px;text-align:right">28</span><span class="t" style="left:130.6px;top:76.57px;font-size:7.23px;line-height:9.40px;color:#bcc1cb;font-family:'Liberation Mono','DejaVu Sans Mono',monospace;white-space:pre"><span style="color:#a7a6cc">mod</span> storage;</span><span class="t" style="left:100.6px;top:88.28px;font-size:7.2px;line-height:9.36px;color:#515a66;font-family:'Liberation Mono','DejaVu Sans Mono',monospace;width:14px;text-align:right">29</span><span class="t" style="left:130.6px;top:88.26px;font-size:7.23px;line-height:9.40px;color:#bcc1cb;font-family:'Liberation Mono','DejaVu Sans Mono',monospace;white-space:pre"><span style="color:#a7a6cc">mod</span> sync;</span><span class="t" style="left:100.6px;top:99.97px;font-size:7.2px;line-height:9.36px;color:#515a66;font-family:'Liberation Mono','DejaVu Sans Mono',monospace;width:14px;text-align:right">30</span><span class="t" style="left:130.6px;top:99.95px;font-size:7.23px;line-height:9.40px;color:#bcc1cb;font-family:'Liberation Mono','DejaVu Sans Mono',monospace;white-space:pre"><span style="color:#a7a6cc">mod</span> table;</span><span class="t" style="left:100.6px;top:111.66px;font-size:7.2px;line-height:9.36px;color:#515a66;font-family:'Liberation Mono','DejaVu Sans Mono',monospace;width:14px;text-align:right">31</span><span class="t" style="left:130.6px;top:111.64px;font-size:7.23px;line-height:9.40px;color:#bcc1cb;font-family:'Liberation Mono','DejaVu Sans Mono',monospace;white-space:pre"><span style="color:#a7a6cc">mod</span> tracing;</span><span class="t" style="left:100.6px;top:123.35px;font-size:7.2px;line-height:9.36px;color:#515a66;font-family:'Liberation Mono','DejaVu Sans Mono',monospace;width:14px;text-align:right">32</span><span class="t" style="left:130.6px;top:123.33px;font-size:7.23px;line-height:9.40px;color:#bcc1cb;font-family:'Liberation Mono','DejaVu Sans Mono',monospace;white-space:pre"><span style="color:#a7a6cc">mod</span> tracked_struct;</span><span class="t" style="left:100.6px;top:135.04px;font-size:7.2px;line-height:9.36px;color:#515a66;font-family:'Liberation Mono','DejaVu Sans Mono',monospace;width:14px;text-align:right">33</span><span class="t" style="left:130.6px;top:135.02px;font-size:7.23px;line-height:9.40px;color:#bcc1cb;font-family:'Liberation Mono','DejaVu Sans Mono',monospace;white-space:pre"><span style="color:#a7a6cc">mod</span> update;</span><span class="t" style="left:100.6px;top:146.73px;font-size:7.2px;line-height:9.36px;color:#515a66;font-family:'Liberation Mono','DejaVu Sans Mono',monospace;width:14px;text-align:right">34</span><span class="t" style="left:130.6px;top:146.71px;font-size:7.23px;line-height:9.40px;color:#bcc1cb;font-family:'Liberation Mono','DejaVu Sans Mono',monospace;white-space:pre"><span style="color:#a7a6cc">mod</span> views;</span><span class="t" style="left:100.6px;top:158.42px;font-size:7.2px;line-height:9.36px;color:#515a66;font-family:'Liberation Mono','DejaVu Sans Mono',monospace;width:14px;text-align:right">35</span><span class="t" style="left:130.6px;top:158.40px;font-size:7.23px;line-height:9.40px;color:#bcc1cb;font-family:'Liberation Mono','DejaVu Sans Mono',monospace;white-space:pre"><span style="color:#a7a6cc">mod</span> zalsa;</span><span class="t" style="left:100.6px;top:170.11px;font-size:7.2px;line-height:9.36px;color:#515a66;font-family:'Liberation Mono','DejaVu Sans Mono',monospace;width:14px;text-align:right">36</span><span class="t" style="left:130.6px;top:170.09px;font-size:7.23px;line-height:9.40px;color:#bcc1cb;font-family:'Liberation Mono','DejaVu Sans Mono',monospace;white-space:pre"><span style="color:#a7a6cc">mod</span> zalsa_local;</span><span class="t" style="left:100.6px;top:181.80px;font-size:7.2px;line-height:9.36px;color:#515a66;font-family:'Liberation Mono','DejaVu Sans Mono',monospace;width:14px;text-align:right">37</span><span class="t" style="left:100.6px;top:193.49px;font-size:7.2px;line-height:9.36px;color:#515a66;font-family:'Liberation Mono','DejaVu Sans Mono',monospace;width:14px;text-align:right">38</span><span class="t" style="left:130.6px;top:193.47px;font-size:7.23px;line-height:9.40px;color:#bcc1cb;font-family:'Liberation Mono','DejaVu Sans Mono',monospace;white-space:pre"><span style="color:#6f7783">#[cfg(not(feature = "inventory"))]</span>    <span style="color:#6f7783">code is inactive due to #[cfg] directives: feature = "inventory" is enabled</span></span><span class="t" style="left:100.6px;top:205.18px;font-size:7.2px;line-height:9.36px;color:#515a66;font-family:'Liberation Mono','DejaVu Sans Mono',monospace;width:14px;text-align:right">39</span><span class="t" style="left:130.6px;top:205.16px;font-size:7.23px;line-height:9.40px;color:#bcc1cb;font-family:'Liberation Mono','DejaVu Sans Mono',monospace;white-space:pre"><span style="color:#6f7783">mod nonce;</span></span><span class="t" style="left:100.6px;top:216.87px;font-size:7.2px;line-height:9.36px;color:#515a66;font-family:'Liberation Mono','DejaVu Sans Mono',monospace;width:14px;text-align:right">40</span><span class="t" style="left:130.6px;top:216.85px;font-size:7.23px;line-height:9.40px;color:#bcc1cb;font-family:'Liberation Mono','DejaVu Sans Mono',monospace;white-space:pre"><span style="color:#a6adba">#[cfg(rust_analyzer)]</span></span><span class="t" style="left:100.6px;top:228.56px;font-size:7.2px;line-height:9.36px;color:#515a66;font-family:'Liberation Mono','DejaVu Sans Mono',monospace;width:14px;text-align:right">41</span><span class="t" style="left:130.6px;top:228.54px;font-size:7.23px;line-height:9.40px;color:#bcc1cb;font-family:'Liberation Mono','DejaVu Sans Mono',monospace;white-space:pre"><span style="color:#a7a6cc">fn</span> <span style="color:#7eaad6">err</span>() {</span><span class="t" style="left:100.6px;top:240.25px;font-size:7.2px;line-height:9.36px;color:#515a66;font-family:'Liberation Mono','DejaVu Sans Mono',monospace;width:14px;text-align:right">42</span><span class="t" style="left:130.6px;top:240.23px;font-size:7.23px;line-height:9.40px;color:#bcc1cb;font-family:'Liberation Mono','DejaVu Sans Mono',monospace;white-space:pre">    <span style="color:#7eaad6">err</span>(1);    <span style="color:#d8695f">expected 0 arguments, found 1</span></span><span class="t" style="left:100.6px;top:251.94px;font-size:7.2px;line-height:9.36px;color:#515a66;font-family:'Liberation Mono','DejaVu Sans Mono',monospace;width:14px;text-align:right">43</span><span class="t" style="left:130.6px;top:251.92px;font-size:7.23px;line-height:9.40px;color:#bcc1cb;font-family:'Liberation Mono','DejaVu Sans Mono',monospace;white-space:pre">}</span><span class="t" style="left:100.6px;top:263.63px;font-size:7.2px;line-height:9.36px;color:#515a66;font-family:'Liberation Mono','DejaVu Sans Mono',monospace;width:14px;text-align:right">44</span><span class="t" style="left:100.6px;top:275.32px;font-size:7.2px;line-height:9.36px;color:#515a66;font-family:'Liberation Mono','DejaVu Sans Mono',monospace;width:14px;text-align:right">45</span><span class="t" style="left:130.6px;top:275.30px;font-size:7.23px;line-height:9.40px;color:#bcc1cb;font-family:'Liberation Mono','DejaVu Sans Mono',monospace;white-space:pre"><span style="color:#a6adba">#[cfg(</span><span style="color:#7eaad6">feature</span><span style="color:#a6adba"> = </span><span style="color:#a3b78f">"rayon"</span><span style="color:#a6adba">)]</span></span><span class="t" style="left:100.6px;top:287.01px;font-size:7.2px;line-height:9.36px;color:#515a66;font-family:'Liberation Mono','DejaVu Sans Mono',monospace;width:14px;text-align:right">46</span><span class="t" style="left:130.6px;top:286.99px;font-size:7.23px;line-height:9.40px;color:#bcc1cb;font-family:'Liberation Mono','DejaVu Sans Mono',monospace;white-space:pre"><span style="color:#a7a6cc">mod</span> parallel;</span><span class="t" style="left:100.6px;top:298.70px;font-size:7.2px;line-height:9.36px;color:#515a66;font-family:'Liberation Mono','DejaVu Sans Mono',monospace;width:14px;text-align:right">47</span><span class="t" style="left:100.6px;top:310.39px;font-size:7.2px;line-height:9.36px;color:#515a66;font-family:'Liberation Mono','DejaVu Sans Mono',monospace;width:14px;text-align:right">48</span><span class="t" style="left:130.6px;top:310.37px;font-size:7.23px;line-height:9.40px;color:#bcc1cb;font-family:'Liberation Mono','DejaVu Sans Mono',monospace;white-space:pre"><span style="color:#a6adba">#[cfg(</span><span style="color:#7eaad6">feature</span><span style="color:#a6adba"> = </span><span style="color:#a3b78f">"rayon"</span><span style="color:#a6adba">)]</span></span><span class="t" style="left:100.6px;top:322.08px;font-size:7.2px;line-height:9.36px;color:#515a66;font-family:'Liberation Mono','DejaVu Sans Mono',monospace;width:14px;text-align:right">49</span><span class="t" style="left:130.6px;top:322.06px;font-size:7.23px;line-height:9.40px;color:#bcc1cb;font-family:'Liberation Mono','DejaVu Sans Mono',monospace;white-space:pre"><span style="color:#a7a6cc">pub use</span> parallel::{join, par_map};</span><span class="t" style="left:100.6px;top:333.77px;font-size:7.2px;line-height:9.36px;color:#515a66;font-family:'Liberation Mono','DejaVu Sans Mono',monospace;width:14px;text-align:right">50</span><span class="t" style="left:130.6px;top:333.75px;font-size:7.23px;line-height:9.40px;color:#bcc1cb;font-family:'Liberation Mono','DejaVu Sans Mono',monospace;white-space:pre"><span style="color:#a6adba">#[cfg(</span><span style="color:#7eaad6">feature</span><span style="color:#a6adba"> = </span><span style="color:#a3b78f">"macros"</span><span style="color:#a6adba">)]</span></span><span class="t" style="left:100.6px;top:345.46px;font-size:7.2px;line-height:9.36px;color:#515a66;font-family:'Liberation Mono','DejaVu Sans Mono',monospace;width:14px;text-align:right">51</span><span class="t" style="left:130.6px;top:345.44px;font-size:7.23px;line-height:9.40px;color:#bcc1cb;font-family:'Liberation Mono','DejaVu Sans Mono',monospace;white-space:pre"><span style="color:#a7a6cc">pub use</span> salsa_macros::{accumulator, db, input, interned, tracked, <span style="color:#7fb0ba">Supertype</span>, <span style="color:#7fb0ba">Update</span>};</span><span class="t" style="left:100.6px;top:357.15px;font-size:7.2px;line-height:9.36px;color:#515a66;font-family:'Liberation Mono','DejaVu Sans Mono',monospace;width:14px;text-align:right">52</span><span class="t" style="left:100.6px;top:368.84px;font-size:7.2px;line-height:9.36px;color:#515a66;font-family:'Liberation Mono','DejaVu Sans Mono',monospace;width:14px;text-align:right">53</span><span class="t" style="left:130.6px;top:368.82px;font-size:7.23px;line-height:9.40px;color:#bcc1cb;font-family:'Liberation Mono','DejaVu Sans Mono',monospace;white-space:pre"><span style="color:#a6adba">#[cfg(</span><span style="color:#7eaad6">feature</span><span style="color:#a6adba"> = </span><span style="color:#a3b78f">"salsa_unstable"</span><span style="color:#a6adba">)]</span></span><span class="t" style="left:100.6px;top:380.53px;font-size:7.2px;line-height:9.36px;color:#515a66;font-family:'Liberation Mono','DejaVu Sans Mono',monospace;width:14px;text-align:right">54</span><span class="t" style="left:130.6px;top:380.51px;font-size:7.23px;line-height:9.40px;color:#bcc1cb;font-family:'Liberation Mono','DejaVu Sans Mono',monospace;white-space:pre"><span style="color:#a7a6cc">pub use</span> self::database::<span style="color:#7fb0ba">IngredientInfo</span>;</span><span class="t" style="left:100.6px;top:392.22px;font-size:7.2px;line-height:9.36px;color:#515a66;font-family:'Liberation Mono','DejaVu Sans Mono',monospace;width:14px;text-align:right">55</span><div class="abs" style="left:85.5px;top:402.79px;width:534.5px;height:11.7px;background:#2e333c;"></div><span class="t" style="left:100.6px;top:403.91px;font-size:7.2px;line-height:9.36px;color:#d0d4da;font-family:'Liberation Mono','DejaVu Sans Mono',monospace;width:14px;text-align:right">56</span><span class="t" style="left:130.6px;top:403.89px;font-size:7.23px;line-height:9.40px;color:#bcc1cb;font-family:'Liberation Mono','DejaVu Sans Mono',monospace;white-space:pre"><span style="color:#a6adba">#[cfg(</span><span style="color:#7eaad6">feature</span><span style="color:#a6adba"> = </span><span style="color:#a3b78f">"accumulator"</span><span style="color:#a6adba">)]</span>      <span style="color:#6f7783">Lukas Wirth, 3 months ago</span></span><span class="t" style="left:100.6px;top:415.60px;font-size:7.2px;line-height:9.36px;color:#515a66;font-family:'Liberation Mono','DejaVu Sans Mono',monospace;width:14px;text-align:right">57</span><span class="t" style="left:130.6px;top:415.58px;font-size:7.23px;line-height:9.40px;color:#bcc1cb;font-family:'Liberation Mono','DejaVu Sans Mono',monospace;white-space:pre"><span style="color:#a7a6cc">pub use</span> self::accumulator::<span style="color:#7fb0ba">Accumulator</span>;</span><span class="t" style="left:100.6px;top:427.29px;font-size:7.2px;line-height:9.36px;color:#515a66;font-family:'Liberation Mono','DejaVu Sans Mono',monospace;width:14px;text-align:right">58</span><span class="t" style="left:130.6px;top:427.27px;font-size:7.23px;line-height:9.40px;color:#bcc1cb;font-family:'Liberation Mono','DejaVu Sans Mono',monospace;white-space:pre"><span style="color:#a7a6cc">pub use</span> self::active_query::<span style="color:#7fb0ba">Backtrace</span>;</span><span class="t" style="left:100.6px;top:438.98px;font-size:7.2px;line-height:9.36px;color:#515a66;font-family:'Liberation Mono','DejaVu Sans Mono',monospace;width:14px;text-align:right">59</span><span class="t" style="left:130.6px;top:438.96px;font-size:7.23px;line-height:9.40px;color:#bcc1cb;font-family:'Liberation Mono','DejaVu Sans Mono',monospace;white-space:pre"><span style="color:#a7a6cc">pub use</span> self::cancelled::<span style="color:#7fb0ba">Cancelled</span>;</span><span class="t" style="left:100.6px;top:450.67px;font-size:7.2px;line-height:9.36px;color:#515a66;font-family:'Liberation Mono','DejaVu Sans Mono',monospace;width:14px;text-align:right">60</span><span class="t" style="left:130.6px;top:450.65px;font-size:7.23px;line-height:9.40px;color:#bcc1cb;font-family:'Liberation Mono','DejaVu Sans Mono',monospace;white-space:pre"><span style="color:#a7a6cc">pub use</span> self::cycle::<span style="color:#7fb0ba">CycleRecoveryAction</span>;</span><span class="t" style="left:100.6px;top:462.36px;font-size:7.2px;line-height:9.36px;color:#515a66;font-family:'Liberation Mono','DejaVu Sans Mono',monospace;width:14px;text-align:right">61</span><span class="t" style="left:130.6px;top:462.34px;font-size:7.23px;line-height:9.40px;color:#bcc1cb;font-family:'Liberation Mono','DejaVu Sans Mono',monospace;white-space:pre"><span style="color:#a7a6cc">pub use</span> self::database::<span style="color:#7fb0ba">Database</span>;</span><span class="t" style="left:100.6px;top:474.05px;font-size:7.2px;line-height:9.36px;color:#515a66;font-family:'Liberation Mono','DejaVu Sans Mono',monospace;width:14px;text-align:right">62</span><span class="t" style="left:130.6px;top:474.03px;font-size:7.23px;line-height:9.40px;color:#bcc1cb;font-family:'Liberation Mono','DejaVu Sans Mono',monospace;white-space:pre"><span style="color:#a7a6cc">pub use</span> self::database_impl::<span style="color:#7fb0ba">DatabaseImpl</span>;</span><span class="t" style="left:100.6px;top:485.74px;font-size:7.2px;line-height:9.36px;color:#515a66;font-family:'Liberation Mono','DejaVu Sans Mono',monospace;width:14px;text-align:right">63</span><span class="t" style="left:130.6px;top:485.72px;font-size:7.23px;line-height:9.40px;color:#bcc1cb;font-family:'Liberation Mono','DejaVu Sans Mono',monospace;white-space:pre"><span style="color:#a7a6cc">pub use</span> self::durability::<span style="color:#7fb0ba">Durability</span>;</span><div class="abs" style="left:86.5px;top:215px;width:3px;height:46.5px;background:#3fae7a;"></div><div class="abs" style="left:620px;top:90px;width:6px;height:83px;background:#4a505d;"></div><div class="abs" style="left:131px;top:489px;width:407px;height:4px;background:#444a57;"></div><div class="abs" style="left:0px;top:496.7px;width:626px;height:12.2px;background:#3d4350;"></div><span class="t" style="left:4px;top:499.55px;font-size:5px;line-height:6.50px;color:#aab0bb;letter-spacing:2px">&#9776; &#10148; &#10022; &#9998; &#9883; &#10070;</span><span class="t" style="left:60px;top:499.55px;font-size:5px;line-height:6.50px;color:#d8695f;">&#8855; 1</span><span class="t" style="left:75px;top:499.68px;font-size:4.8px;line-height:6.24px;color:#aab0bb;">Rust-analyzer: Downloading (1/2)</span><span class="t" style="left:545px;top:499.68px;font-size:4.8px;line-height:6.24px;color:#aab0bb;white-space:pre;letter-spacing:.5px">56:27   Rust  &#9633; &#9638; &#9881; &#10022;</span><div class="abs" style="left:626px;top:0px;width:628px;height:13.2px;background:#3d4350;"></div><div class="abs" style="left:631px;top:6px;width:3.4px;height:1px;background:#c5cad3;"></div><span class="t" style="left:640px;top:3.02px;font-size:5.2px;line-height:6.76px;color:#c5cad3;">salsa</span><span class="t" style="left:654.5px;top:3.02px;font-size:5.2px;line-height:6.76px;color:#8f97a3;">collab-rs</span><div class="abs" style="left:1143px;top:2.6px;width:65px;height:8px;background:#454b58;border-radius:2px"></div><span class="t" style="left:1147px;top:3.61px;font-size:4.6px;line-height:5.98px;color:#d5d9e0;">&#9632; Lukas Wirth @ claude-code  &#215;</span><span class="t" style="left:1236px;top:2.50px;font-size:6px;line-height:7.80px;color:#aab0bb;">&#9633;</span><span class="t" style="left:1248px;top:2.17px;font-size:6.5px;line-height:8.45px;color:#aab0bb;">&#10005;</span><div class="abs" style="left:626px;top:13.2px;width:1px;height:483.5px;background:#23272e;"></div><div class="abs" style="left:627px;top:13.2px;width:86px;height:483.5px;background:#333842;"></div><div class="abs" style="left:629px;top:15.4px;width:4.6px;height:4.4px;background:#8b93a0;border-radius:1px"></div><span class="t" style="left:636.5px;top:14.16px;font-size:5.3px;line-height:6.89px;color:#aab0bb;">salsa</span><div class="abs" style="left:636.5px;top:24.8px;width:4.6px;height:4.6px;border:0.8px solid #9aa1ad;border-radius:1px"></div><span class="t" style="left:644.5px;top:23.95px;font-size:5.3px;line-height:6.89px;color:#b4bac4;">.devcontainer</span><div class="abs" style="left:636.5px;top:34.3px;width:4.6px;height:4.6px;border:0.8px solid #9aa1ad;border-radius:1px"></div><span class="t" style="left:644.5px;top:33.45px;font-size:5.3px;line-height:6.89px;color:#7f8792;">.github</span><div class="abs" style="left:636.5px;top:43.8px;width:4.6px;height:4.6px;border:0.8px solid #9aa1ad;border-radius:1px"></div><span class="t" style="left:644.5px;top:42.95px;font-size:5.3px;line-height:6.89px;color:#b4bac4;">benches</span><div class="abs" style="left:636.5px;top:53.3px;width:4.6px;height:4.6px;border:0.8px solid #9aa1ad;border-radius:1px"></div><span class="t" style="left:644.5px;top:52.45px;font-size:5.3px;line-height:6.89px;color:#7f8792;">book</span><div class="abs" style="left:636.5px;top:62.8px;width:4.6px;height:4.6px;border:0.8px solid #9aa1ad;border-radius:1px"></div><span class="t" style="left:644.5px;top:61.96px;font-size:5.3px;line-height:6.89px;color:#b4bac4;">components</span><div class="abs" style="left:636.5px;top:72.3px;width:4.6px;height:4.6px;border:0.8px solid #9aa1ad;border-radius:1px"></div><span class="t" style="left:644.5px;top:71.46px;font-size:5.3px;line-height:6.89px;color:#b4bac4;">examples</span><div class="abs" style="left:636.5px;top:81.8px;width:5px;height:4.6px;background:#9aa1ad;border-radius:1px;opacity:.8"></div><span class="t" style="left:644.5px;top:80.96px;font-size:5.3px;line-height:6.89px;color:#b4bac4;">src</span><div class="abs" style="left:643.8px;top:91.3px;width:4.6px;height:4.6px;border:0.8px solid #9aa1ad;border-radius:1px"></div><span class="t" style="left:651.8px;top:90.46px;font-size:5.3px;line-height:6.89px;color:#b4bac4;">accumulator</span><div class="abs" style="left:643.8px;top:100.8px;width:4.6px;height:4.6px;border:0.8px solid #9aa1ad;border-radius:1px"></div><span class="t" style="left:651.8px;top:99.96px;font-size:5.3px;line-height:6.89px;color:#b4bac4;">function</span><div class="abs" style="left:643.8px;top:110.3px;width:4.6px;height:4.6px;border:0.8px solid #9aa1ad;border-radius:1px"></div><span class="t" style="left:651.8px;top:109.46px;font-size:5.3px;line-height:6.89px;color:#b4bac4;">input</span><div class="abs" style="left:643.8px;top:119.8px;width:4.6px;height:4.6px;border:0.8px solid #9aa1ad;border-radius:1px"></div><span class="t" style="left:651.8px;top:118.96px;font-size:5.3px;line-height:6.89px;color:#b4bac4;">runtime</span><div class="abs" style="left:643.8px;top:129.3px;width:4.6px;height:4.6px;border:0.8px solid #9aa1ad;border-radius:1px"></div><span class="t" style="left:651.8px;top:128.46px;font-size:5.3px;line-height:6.89px;color:#b4bac4;">table</span><div class="abs" style="left:643.8px;top:138.8px;width:4.6px;height:4.6px;border:0.8px solid #9aa1ad;border-radius:1px"></div><span class="t" style="left:651.8px;top:137.96px;font-size:5.3px;line-height:6.89px;color:#b4bac4;">tracked_struct</span><div class="abs" style="left:644.2px;top:148.5px;width:4.4px;height:4.4px;border-radius:50%;border:1px solid #9aa1ad"></div><span class="t" style="left:651.8px;top:147.46px;font-size:5.3px;line-height:6.89px;color:#b4bac4;">accumulator.rs</span><div class="abs" style="left:644.2px;top:158px;width:4.4px;height:4.4px;border-radius:50%;border:1px solid #9aa1ad"></div><span class="t" style="left:651.8px;top:156.96px;font-size:5.3px;line-height:6.89px;color:#b4bac4;">active_query.rs</span><div class="abs" style="left:644.2px;top:167.5px;width:4.4px;height:4.4px;border-radius:50%;border:1px solid #9aa1ad"></div><span class="t" style="left:651.8px;top:166.46px;font-size:5.3px;line-height:6.89px;color:#b4bac4;">attach.rs</span><div class="abs" style="left:644.2px;top:177px;width:4.4px;height:4.4px;border-radius:50%;border:1px solid #9aa1ad"></div><span class="t" style="left:651.8px;top:175.96px;font-size:5.3px;line-height:6.89px;color:#b4bac4;">cancelled.rs</span><div class="abs" style="left:644.2px;top:186.5px;width:4.4px;height:4.4px;border-radius:50%;border:1px solid #9aa1ad"></div><span class="t" style="left:651.8px;top:185.46px;font-size:5.3px;line-height:6.89px;color:#b4bac4;">cycle.rs</span><div class="abs" style="left:644.2px;top:196px;width:4.4px;height:4.4px;border-radius:50%;border:1px solid #9aa1ad"></div><span class="t" style="left:651.8px;top:194.96px;font-size:5.3px;line-height:6.89px;color:#b4bac4;">database.rs</span><div class="abs" style="left:644.2px;top:205.5px;width:4.4px;height:4.4px;border-radius:50%;border:1px solid #9aa1ad"></div><span class="t" style="left:651.8px;top:204.46px;font-size:5.3px;line-height:6.89px;color:#b4bac4;">database_impl.rs</span><div class="abs" style="left:644.2px;top:215px;width:4.4px;height:4.4px;border-radius:50%;border:1px solid #9aa1ad"></div><span class="t" style="left:651.8px;top:213.96px;font-size:5.3px;line-height:6.89px;color:#b4bac4;">durability.rs</span><div class="abs" style="left:644.2px;top:224.5px;width:4.4px;height:4.4px;border-radius:50%;border:1px solid #9aa1ad"></div><span class="t" style="left:651.8px;top:223.46px;font-size:5.3px;line-height:6.89px;color:#b4bac4;">event.rs</span><div class="abs" style="left:644.2px;top:234px;width:4.4px;height:4.4px;border-radius:50%;border:1px solid #9aa1ad"></div><span class="t" style="left:651.8px;top:232.96px;font-size:5.3px;line-height:6.89px;color:#b4bac4;">function.rs</span><div class="abs" style="left:644.2px;top:243.5px;width:4.4px;height:4.4px;border-radius:50%;border:1px solid #9aa1ad"></div><span class="t" style="left:651.8px;top:242.46px;font-size:5.3px;line-height:6.89px;color:#b4bac4;">hash.rs</span><div class="abs" style="left:644.2px;top:253px;width:4.4px;height:4.4px;border-radius:50%;border:1px solid #9aa1ad"></div><span class="t" style="left:651.8px;top:251.96px;font-size:5.3px;line-height:6.89px;color:#7f8792;">id.rs</span><div class="abs" style="left:644.2px;top:262.5px;width:4.4px;height:4.4px;border-radius:50%;border:1px solid #9aa1ad"></div><span class="t" style="left:651.8px;top:261.45px;font-size:5.3px;line-height:6.89px;color:#b4bac4;">ingredient.rs</span><div class="abs" style="left:644.2px;top:272px;width:4.4px;height:4.4px;border-radius:50%;border:1px solid #9aa1ad"></div><span class="t" style="left:651.8px;top:270.95px;font-size:5.3px;line-height:6.89px;color:#b4bac4;">ingredient_cache.rs</span><div class="abs" style="left:644.2px;top:281.5px;width:4.4px;height:4.4px;border-radius:50%;border:1px solid #9aa1ad"></div><span class="t" style="left:651.8px;top:280.45px;font-size:5.3px;line-height:6.89px;color:#b4bac4;">input.rs</span><div class="abs" style="left:644.2px;top:291px;width:4.4px;height:4.4px;border-radius:50%;border:1px solid #9aa1ad"></div><span class="t" style="left:651.8px;top:289.95px;font-size:5.3px;line-height:6.89px;color:#7f8792;">interned.rs</span><div class="abs" style="left:644.2px;top:300.5px;width:4.4px;height:4.4px;border-radius:50%;border:1px solid #9aa1ad"></div><span class="t" style="left:651.8px;top:299.45px;font-size:5.3px;line-height:6.89px;color:#7f8792;">key.rs</span><div class="abs" style="left:644.2px;top:310px;width:4.4px;height:4.4px;border-radius:50%;border:1px solid #9aa1ad"></div><span class="t" style="left:651.8px;top:308.95px;font-size:5.3px;line-height:6.89px;color:#b4bac4;">lib.rs</span><div class="abs" style="left:644.2px;top:319.5px;width:4.4px;height:4.4px;border-radius:50%;border:1px solid #9aa1ad"></div><span class="t" style="left:651.8px;top:318.45px;font-size:5.3px;line-height:6.89px;color:#b4bac4;">memo_ingredient_indices.rs</span><div class="abs" style="left:644.2px;top:329px;width:4.4px;height:4.4px;border-radius:50%;border:1px solid #9aa1ad"></div><span class="t" style="left:651.8px;top:327.95px;font-size:5.3px;line-height:6.89px;color:#7f8792;">nonce.rs</span><div class="abs" style="left:644.2px;top:338.5px;width:4.4px;height:4.4px;border-radius:50%;border:1px solid #9aa1ad"></div><span class="t" style="left:651.8px;top:337.45px;font-size:5.3px;line-height:6.89px;color:#b4bac4;">parallel.rs</span><div class="abs" style="left:644.2px;top:348px;width:4.4px;height:4.4px;border-radius:50%;border:1px solid #9aa1ad"></div><span class="t" style="left:651.8px;top:346.95px;font-size:5.3px;line-height:6.89px;color:#7f8792;">return_mode.rs</span><div class="abs" style="left:644.2px;top:357.5px;width:4.4px;height:4.4px;border-radius:50%;border:1px solid #9aa1ad"></div><span class="t" style="left:651.8px;top:356.45px;font-size:5.3px;line-height:6.89px;color:#b4bac4;">revision.rs</span><div class="abs" style="left:644.2px;top:367px;width:4.4px;height:4.4px;border-radius:50%;border:1px solid #9aa1ad"></div><span class="t" style="left:651.8px;top:365.95px;font-size:5.3px;line-height:6.89px;color:#7f8792;">runtime.rs</span><div class="abs" style="left:644.2px;top:376.5px;width:4.4px;height:4.4px;border-radius:50%;border:1px solid #9aa1ad"></div><span class="t" style="left:651.8px;top:375.45px;font-size:5.3px;line-height:6.89px;color:#b4bac4;">salsa_struct.rs</span><div class="abs" style="left:644.2px;top:386px;width:4.4px;height:4.4px;border-radius:50%;border:1px solid #9aa1ad"></div><span class="t" style="left:651.8px;top:384.95px;font-size:5.3px;line-height:6.89px;color:#7f8792;">storage.rs</span><div class="abs" style="left:644.2px;top:395.5px;width:4.4px;height:4.4px;border-radius:50%;border:1px solid #9aa1ad"></div><span class="t" style="left:651.8px;top:394.45px;font-size:5.3px;line-height:6.89px;color:#7f8792;">sync.rs</span><div class="abs" style="left:644.2px;top:405px;width:4.4px;height:4.4px;border-radius:50%;border:1px solid #9aa1ad"></div><span class="t" style="left:651.8px;top:403.95px;font-size:5.3px;line-height:6.89px;color:#7f8792;">table.rs</span><div class="abs" style="left:644.2px;top:414.5px;width:4.4px;height:4.4px;border-radius:50%;border:1px solid #9aa1ad"></div><span class="t" style="left:651.8px;top:413.45px;font-size:5.3px;line-height:6.89px;color:#b4bac4;">tracing.rs</span><div class="abs" style="left:644.2px;top:424px;width:4.4px;height:4.4px;border-radius:50%;border:1px solid #9aa1ad"></div><span class="t" style="left:651.8px;top:422.95px;font-size:5.3px;line-height:6.89px;color:#b4bac4;">tracked_struct.rs</span><div class="abs" style="left:644.2px;top:433.5px;width:4.4px;height:4.4px;border-radius:50%;border:1px solid #9aa1ad"></div><span class="t" style="left:651.8px;top:432.45px;font-size:5.3px;line-height:6.89px;color:#7f8792;">update.rs</span><div class="abs" style="left:644.2px;top:443px;width:4.4px;height:4.4px;border-radius:50%;border:1px solid #9aa1ad"></div><span class="t" style="left:651.8px;top:441.95px;font-size:5.3px;line-height:6.89px;color:#7f8792;">views.rs</span><div class="abs" style="left:644.2px;top:452.5px;width:4.4px;height:4.4px;border-radius:50%;border:1px solid #9aa1ad"></div><span class="t" style="left:651.8px;top:451.45px;font-size:5.3px;line-height:6.89px;color:#b4bac4;">zalsa.rs</span><div class="abs" style="left:644.2px;top:462px;width:4.4px;height:4.4px;border-radius:50%;border:1px solid #9aa1ad"></div><span class="t" style="left:651.8px;top:460.95px;font-size:5.3px;line-height:6.89px;color:#7f8792;">zalsa_local.rs</span><div class="abs" style="left:636.5px;top:471.3px;width:4.6px;height:4.6px;border:0.8px solid #9aa1ad;border-radius:1px"></div><span class="t" style="left:644.5px;top:470.45px;font-size:5.3px;line-height:6.89px;color:#7f8792;">target</span><div class="abs" style="left:636.5px;top:480.8px;width:4.6px;height:4.6px;border:0.8px solid #9aa1ad;border-radius:1px"></div><span class="t" style="left:644.5px;top:479.95px;font-size:5.3px;line-height:6.89px;color:#7f8792;">tests</span><div class="abs" style="left:636.5px;top:490.3px;width:4.6px;height:4.6px;border:0.8px solid #9aa1ad;border-radius:1px"></div><span class="t" style="left:644.5px;top:489.45px;font-size:5.3px;line-height:6.89px;color:#7f8792;">.dir-locals.el</span><div class="abs" style="left:714px;top:13.2px;width:540px;height:10px;background:#333842;"></div><span class="t" style="left:720px;top:14.95px;font-size:5px;line-height:6.50px;color:#7f8794;">&#8592;  &#8594;</span><span class="t" style="left:744px;top:14.82px;font-size:5.2px;line-height:6.76px;color:#aab0bb;">&#9881; lib.rs</span><div class="abs" style="left:772px;top:13.2px;width:26px;height:10px;background:#2b3039;"></div><span class="t" style="left:777px;top:14.82px;font-size:5.2px;line-height:6.76px;color:#d8695f;">&#8855; 1</span><span class="t" style="left:1227px;top:14.30px;font-size:6px;line-height:7.80px;color:#aab0bb;letter-spacing:1px">+ &#9707; &#10530;</span><div class="abs" style="left:714px;top:23.2px;width:540px;height:473.5px;background:#333843;"></div><span class="t" style="left:719px;top:27.89px;font-size:5.4px;line-height:7.02px;color:#8f97a3;font-family:'Liberation Mono','DejaVu Sans Mono',monospace;">src\lib.rs &#8250; fn err</span><span class="t" style="left:1236px;top:27.89px;font-size:5.4px;line-height:7.02px;color:#8f97a3;">&#8635; &#9651;</span><div class="abs" style="left:718px;top:38.4px;width:530px;height:0.8px;background:#474d5a;"></div><div class="abs" style="left:718px;top:50.8px;width:530px;height:0.8px;background:#474d5a;"></div><span class="t" style="left:720px;top:41.49px;font-size:5.4px;line-height:7.02px;color:#d8695f;font-family:'Liberation Mono','DejaVu Sans Mono',monospace;">rust-an</span><span class="t" style="left:1136.5px;top:42.01px;font-size:4.6px;line-height:5.98px;color:#aab0bb;white-space:pre">Aa  ab  .*    &#9633; &#9636; &#10530;      &#8249;  &#8250;   0/2            &#215;</span><div class="abs" style="left:716px;top:57.6px;width:531px;height:18.4px;background:#333843;border:0.8px solid #3d434f;border-radius:2px"></div><span class="t" style="left:724px;top:62.05px;font-size:7px;line-height:9.10px;color:#c5cad3;">&#8964;</span><span class="t" style="left:750px;top:61.40px;font-size:8.3px;line-height:10.79px;color:#d5d9e0;">&#9881; lib.rs</span><span class="t" style="left:783px;top:61.40px;font-size:8.3px;line-height:10.79px;color:#8f97a3;">src\</span><span class="t" style="left:1170px;top:61.60px;font-size:8px;line-height:10.40px;color:#d5d9e0;letter-spacing:-0.2px">Open File</span><span class="t" style="left:1207px;top:61.60px;font-size:8px;line-height:10.40px;color:#8f97a3;letter-spacing:-0.2px">Alt-Enter</span><div class="abs" style="left:714px;top:78.8px;width:3.2px;height:38.6px;background:#3fae7a;"></div><div class="abs" style="left:717.2px;top:78.8px;width:537px;height:38.6px;background:#2d3139;"></div><div class="abs" style="left:717.2px;top:104px;width:537px;height:12.6px;background:#343944;"></div><span class="t" style="left:735px;top:80.66px;font-size:7.6px;line-height:9.88px;color:#515a66;font-family:'Liberation Mono','DejaVu Sans Mono',monospace;width:12px;text-align:right">41</span><span class="t" style="left:760px;top:80.66px;font-size:7.6px;line-height:9.88px;color:#bcc1cb;font-family:'Liberation Mono','DejaVu Sans Mono',monospace;white-space:pre"><span style="color:#a7a6cc">fn</span> <span style="color:#7eaad6">err</span>() {</span><span class="t" style="left:735px;top:93.06px;font-size:7.6px;line-height:9.88px;color:#515a66;font-family:'Liberation Mono','DejaVu Sans Mono',monospace;width:12px;text-align:right">42</span><span class="t" style="left:760px;top:93.06px;font-size:7.6px;line-height:9.88px;color:#bcc1cb;font-family:'Liberation Mono','DejaVu Sans Mono',monospace;white-space:pre">    <span style="color:#7eaad6">err</span>(<u style="text-decoration-color:#d8695f">1</u>);</span><span class="t" style="left:735px;top:105.46px;font-size:7.6px;line-height:9.88px;color:#e3e6ea;font-family:'Liberation Mono','DejaVu Sans Mono',monospace;width:12px;text-align:right">43</span><span class="t" style="left:760px;top:105.46px;font-size:7.6px;line-height:9.88px;color:#bcc1cb;font-family:'Liberation Mono','DejaVu Sans Mono',monospace;white-space:pre">}</span><span class="t" style="left:722px;top:81.70px;font-size:6px;line-height:7.80px;color:#6f7783;">&#8679;</span><span class="t" style="left:722px;top:106.50px;font-size:6px;line-height:7.80px;color:#6f7783;">&#8681;</span><div class="abs" style="left:818.5px;top:92.4px;width:1px;height:11.6px;background:#d8695f;"></div><span class="t" style="left:823.5px;top:93.19px;font-size:7.4px;line-height:9.62px;color:#c5cad3;letter-spacing:-0.1px">expected 0 arguments, found 1 (rust-analyzer E0107)</span><span class="t" style="left:826px;top:106.70px;font-size:6px;line-height:7.80px;color:#6f7783;">I</span><div class="abs" style="left:626px;top:496.7px;width:628px;height:12.2px;background:#3d4350;"></div><span class="t" style="left:630px;top:499.55px;font-size:5px;line-height:6.50px;color:#aab0bb;white-space:pre;letter-spacing:2px">&#9662;    &#9776; &#10148; &#10022; &#9998; &#9883; &#10070;</span><span class="t" style="left:701px;top:499.55px;font-size:5px;line-height:6.50px;color:#aab0bb;">&#8855; 1</span><span class="t" style="left:1199px;top:499.68px;font-size:4.8px;line-height:6.24px;color:#aab0bb;white-space:pre;letter-spacing:.5px">43:2    &#9633; &#9638; &#9881; &#10022; &#9662;</span><div class="abs" style="left:0px;top:508.9px;width:1254px;height:17.2px;background:#1f232a;"></div><div class="abs" style="left:483px;top:511.5px;width:8px;height:8px;background:#3f8fe8;border-radius:1.5px"></div><div class="abs" style="left:496px;top:510.6px;width:76px;height:10.6px;background:#2f343d;border-radius:5.3px"></div><span class="t" style="left:502px;top:512.75px;font-size:5px;line-height:6.50px;color:#c5cad3;">&#9740; Search</span><div class="abs" style="left:583px;top:511.6px;width:8.6px;height:8.6px;background:#d8dce2;border-radius:1.5px"></div><div class="abs" style="left:599px;top:511.6px;width:8.6px;height:8.6px;background:#f0b232;border-radius:1.5px"></div><div class="abs" style="left:615px;top:511.6px;width:8.6px;height:8.6px;background:#e8622a;border-radius:50%"></div><div class="abs" style="left:631px;top:511.6px;width:8.6px;height:8.6px;background:#e9e9ea;border-radius:50%"></div><div class="abs" style="left:647px;top:511.6px;width:8.6px;height:8.6px;background:#6a6ff0;border-radius:50%"></div><div class="abs" style="left:663px;top:511.6px;width:8.6px;height:8.6px;background:#39404c;border-radius:2px"></div><div class="abs" style="left:679px;top:511.6px;width:8.6px;height:8.6px;background:#4a505d;border-radius:2px"></div><div class="abs" style="left:695px;top:511.6px;width:8.6px;height:8.6px;background:#59616e;border-radius:2px"></div><div class="abs" style="left:711px;top:511.6px;width:8.6px;height:8.6px;background:#3b82c4;border-radius:2px"></div><div class="abs" style="left:727px;top:511.6px;width:8.6px;height:8.6px;background:#5a6270;border-radius:50%"></div><div class="abs" style="left:743px;top:511.6px;width:8.6px;height:8.6px;background:#444a57;border-radius:2px"></div><div class="abs" style="left:759px;top:511.6px;width:8.6px;height:8.6px;background:#6d7481;border-radius:2px"></div><div class="abs" style="left:770px;top:520.5px;width:9px;height:1px;background:#8ab4f8;"></div><span class="t" style="left:1144px;top:512.75px;font-size:5px;line-height:6.50px;color:#c5cad3;white-space:pre">&#8963;   &#9707;  &#9729;  &#9834;  ENG  &#9723; &#9738;</span><span class="t" style="left:1230px;top:510.34px;font-size:4.4px;line-height:5.72px;color:#c5cad3;">4:36 PM</span><span class="t" style="left:1227px;top:515.74px;font-size:4.4px;line-height:5.72px;color:#c5cad3;">11/7/2025</span></div></div>
<div id="status">
<svg style="left:19.8px;top:16.5px" width="28" height="28" viewBox="0 0 16 16" fill="none" stroke="#242529" stroke-width="1.2" stroke-linecap="round" stroke-linejoin="round" ><circle cx="4.5" cy="4" r="1.35"/><circle cx="11.5" cy="4" r="1.35"/><circle cx="4.5" cy="12" r="1.35"/><path d="M4.5 5.4 V10.6 M11.5 5.4 V5.8 A1.7 1.7 0 0 1 9.8 7.5 H6 A1.5 1.5 0 0 0 4.5 9"/></svg><svg style="left:72.5px;top:16.5px" width="28" height="28" viewBox="0 0 16 16" fill="none" stroke="#242529" stroke-width="1.2" stroke-linecap="round" stroke-linejoin="round" ><path d="M8.6 2.6 C9 5.6 9.9 6.9 13.6 8 C9.9 9.1 9 10.4 8.6 13.4 C8.2 10.4 7.3 9.1 3.6 8 C7.3 6.9 8.2 5.6 8.6 2.6 Z" fill="currentColor" fill-opacity="0.18"/><path d="M3.6 2.2 V4.6 M2.4 3.4 H4.8 M12.6 11.6 V14 M11.4 12.8 H13.8" stroke-width="1"/></svg><svg style="left:124px;top:16.5px" width="28" height="28" viewBox="0 0 16 16" fill="none" stroke="#242529" stroke-width="1.2" stroke-linecap="round" stroke-linejoin="round" ><path d="M3.3 2.8 V11 A1.8 1.8 0 0 0 5.1 12.8 H6.4 M3.3 8 H6.4 M8.8 3.4 H13.4 M8.8 8 H13.4 M8.8 12.8 H13.4"/></svg><svg style="left:176.6px;top:16.5px" width="28" height="28" viewBox="0 0 16 16" fill="none" stroke="#5b79e3" stroke-width="1.2" stroke-linecap="round" stroke-linejoin="round" ><circle cx="6.6" cy="5.3" r="2.7"/><path d="M1.8 13.6 A4.8 4.8 0 0 1 11.4 13.6 Z" fill="currentColor" fill-opacity="0.2"/><path d="M11 2.9 A2.7 2.7 0 0 1 11 7.9"/><path d="M12.3 9.6 A4.8 4.8 0 0 1 14.4 13.4"/></svg><svg style="left:228px;top:16.5px" width="28" height="28" viewBox="0 0 16 16" fill="none" stroke="#242529" stroke-width="1.2" stroke-linecap="round" stroke-linejoin="round" ><path d="M4.2 10.8 C4.9 9.8 4.9 8.6 4.9 7.2 A3.1 3.1 0 0 1 11.1 7.2 C11.1 8.6 11.1 9.8 11.8 10.8 Z" fill="currentColor" fill-opacity="0.12"/><path d="M6.6 12.8 A1.5 1.5 0 0 0 9.4 12.8"/><path d="M3.4 10.8 H12.6"/></svg><div class="abs" style="left:272px;top:10px;width:2px;height:42px;background:#cdcdce"></div><svg style="left:289.4px;top:16.5px" width="28" height="28" viewBox="0 0 16 16" fill="none" stroke="#242529" stroke-width="1.2" stroke-linecap="round" stroke-linejoin="round" ><circle cx="7.3" cy="7.3" r="4.3" fill="currentColor" fill-opacity="0.12"/><path d="M10.5 10.5 L13.2 13.2"/></svg><svg style="left:341.9px;top:16.5px" width="28" height="28" viewBox="0 0 16 16" fill="none" stroke="#242529" stroke-width="1.2" stroke-linecap="round" stroke-linejoin="round" ><path d="M4.2 8.6 L6.8 11.2 L12 4.8"/></svg><svg style="left:2778px;top:14.5px" width="36" height="32" viewBox="0 0 18 16" fill="none" stroke="#242529" stroke-width="1.3" stroke-linecap="round" stroke-linejoin="round"><path d="M2.8 5 H7.2 L2.8 10.6 H7.2" stroke-width="1.6" stroke-linecap="square" stroke-linejoin="miter"/><path d="M10.2 5.8 L11.4 7.4 M12.4 4.4 L14.6 7.2" stroke-width="1.3"/><circle cx="13.6" cy="12" r="2.9" fill="#58585a" stroke="none"/></svg><div class="abs" style="left:2822px;top:10px;width:2px;height:42px;background:#cdcdce"></div><svg style="left:2840px;top:16.5px" width="28" height="28" viewBox="0 0 16 16" fill="none" stroke="#242529" stroke-width="1.2" stroke-linecap="round" stroke-linejoin="round" ><rect x="2.3" y="2.6" width="11.4" height="10.8" rx="1.6" fill="currentColor" fill-opacity="0.12"/><path d="M5 6 L7 8 L5 10 M8.4 10.4 H11"/></svg><svg style="left:2891.6px;top:16.5px" width="28" height="28" viewBox="0 0 16 16" fill="none" stroke="#242529" stroke-width="1.2" stroke-linecap="round" stroke-linejoin="round" ><ellipse cx="8" cy="9" rx="3.1" ry="4" fill="currentColor" fill-opacity="0.15"/><path d="M5.4 6.6 A2.6 2.6 0 0 1 10.6 6.6"/><path d="M6.2 4.4 L5.2 3 M9.8 4.4 L10.8 3 M4.9 9 H2.6 M13.4 9 H11.1 M5.2 6.8 L3.2 5.6 M10.8 6.8 L12.8 5.6 M5.4 11.4 L3.4 13 M10.6 11.4 L12.6 13"/></svg><svg style="left:2943.5px;top:16.5px" width="28" height="28" viewBox="0 0 16 16" fill="none" stroke="#242529" stroke-width="1.2" stroke-linecap="round" stroke-linejoin="round" ><path d="M3 2.8 V12.4 H5.6 M3 6 H5.6"/><rect x="7.6" y="4.2" width="5.6" height="3.2" rx="1.6" fill="currentColor"/><rect x="7.6" y="10.4" width="5.6" height="3.2" rx="1.6" fill="currentColor"/></svg></div>
</div>
</body></html>
